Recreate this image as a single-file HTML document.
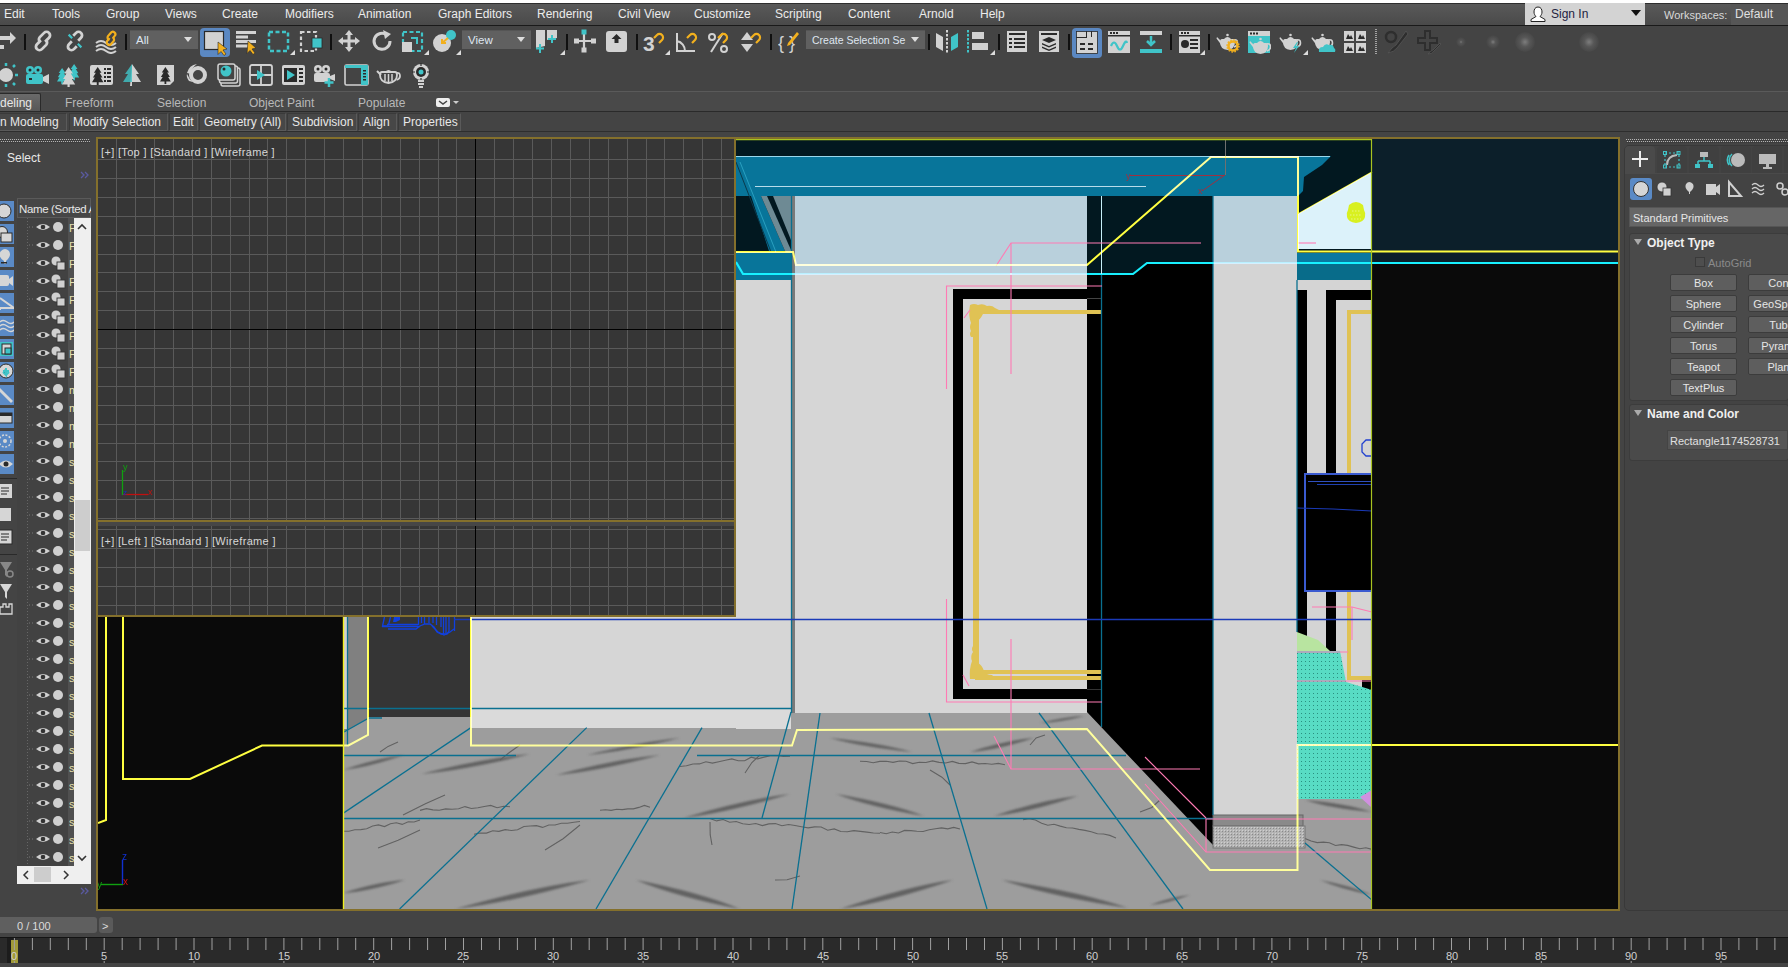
<!DOCTYPE html>
<html><head><meta charset="utf-8">
<style>
*{margin:0;padding:0;box-sizing:border-box}
html,body{width:1788px;height:967px;overflow:hidden;background:#444;font-family:"Liberation Sans",sans-serif;color:#ddd}
.a{position:absolute}
.t{position:absolute;white-space:nowrap;font-size:12px;line-height:14px}
svg text{font-family:"Liberation Sans",sans-serif}
</style></head><body>
<div class="a" style="left:0;top:0;width:1788px;height:3px;background:#fff"></div>
<div class="a" style="left:0;top:3px;width:1788px;height:22px;background:linear-gradient(#595959,#4a4a4a);border-top:1px solid #2e2e2e"></div>
<span class="t" style="left:4px;top:7px;font-size:12px;color:#ececec;">Edit</span>
<span class="t" style="left:52px;top:7px;font-size:12px;color:#ececec;">Tools</span>
<span class="t" style="left:106px;top:7px;font-size:12px;color:#ececec;">Group</span>
<span class="t" style="left:165px;top:7px;font-size:12px;color:#ececec;">Views</span>
<span class="t" style="left:222px;top:7px;font-size:12px;color:#ececec;">Create</span>
<span class="t" style="left:285px;top:7px;font-size:12px;color:#ececec;">Modifiers</span>
<span class="t" style="left:358px;top:7px;font-size:12px;color:#ececec;">Animation</span>
<span class="t" style="left:438px;top:7px;font-size:12px;color:#ececec;">Graph Editors</span>
<span class="t" style="left:537px;top:7px;font-size:12px;color:#ececec;">Rendering</span>
<span class="t" style="left:618px;top:7px;font-size:12px;color:#ececec;">Civil View</span>
<span class="t" style="left:694px;top:7px;font-size:12px;color:#ececec;">Customize</span>
<span class="t" style="left:775px;top:7px;font-size:12px;color:#ececec;">Scripting</span>
<span class="t" style="left:848px;top:7px;font-size:12px;color:#ececec;">Content</span>
<span class="t" style="left:919px;top:7px;font-size:12px;color:#ececec;">Arnold</span>
<span class="t" style="left:980px;top:7px;font-size:12px;color:#ececec;">Help</span>
<div class="a" style="left:0;top:25px;width:1788px;height:1px;background:#1a1a1a"></div>
<div class="a" style="left:1525px;top:3px;width:120px;height:22px;background:#d3d3d3"></div>
<span class="t" style="left:1551px;top:7px;font-size:12px;color:#1e1e40;">Sign In</span>
<svg class="a" style="left:1530px;top:5px" width="16" height="18"><path d="M8,2 c-3,0 -4,2.5 -4,5 c0,2 1,3.5 2,4.5 l-5,3 v2 h14 v-2 l-5,-3 c1,-1 2,-2.5 2,-4.5 c0,-2.5 -1,-5 -4,-5z" fill="#fff" stroke="#222" stroke-width="1"/></svg>
<svg class="a" style="left:1631px;top:10px" width="10" height="6"><path d="M0,0 h10 l-5,6z" fill="#111"/></svg>
<span class="t" style="left:1664px;top:8px;font-size:11px;color:#d8d8d8;">Workspaces:</span>
<div class="a" style="left:1731px;top:4px;width:57px;height:21px;background:#565656"></div>
<span class="t" style="left:1735px;top:7px;font-size:12px;color:#e0e0e0;">Default</span>
<div class="a" style="left:0;top:91px;width:1788px;height:1px;background:#5a5a5a"></div>
<div class="a" style="left:0;top:92px;width:1788px;height:20px;background:#494949"></div>
<div class="a" style="left:-5px;top:93px;width:46px;height:20px;background:linear-gradient(#6a6a6a,#555);border:1px solid #2a2a2a;border-bottom:none;border-radius:2px 2px 0 0"></div>
<div class="a" style="left:0;top:111px;width:1788px;height:1px;background:#2a2a2a"></div>
<span class="t" style="left:0px;top:96px;font-size:12px;color:#e8e8e8;">deling</span>
<span class="t" style="left:65px;top:96px;font-size:12px;color:#b8b8b8;">Freeform</span>
<span class="t" style="left:157px;top:96px;font-size:12px;color:#b8b8b8;">Selection</span>
<span class="t" style="left:249px;top:96px;font-size:12px;color:#b8b8b8;">Object Paint</span>
<span class="t" style="left:358px;top:96px;font-size:12px;color:#b8b8b8;">Populate</span>
<svg class="a" style="left:436px;top:97px" width="26" height="10"><rect x="0" y="1" width="14" height="9" rx="2" fill="#eee"/><path d="M3,4 l4,3 l4,-3" stroke="#444" stroke-width="1.5" fill="none"/><path d="M17,4 h6 l-3,3z" fill="#ccc"/></svg>
<div class="a" style="left:0;top:112px;width:1788px;height:20px;background:#444"></div>
<div class="a" style="left:-5px;top:113px;width:72px;height:18px;border:1px solid #5a5a5a;border-top-color:#3a3a3a;border-left-color:#3a3a3a;background:#474747"></div>
<div class="a" style="left:69px;top:113px;width:99px;height:18px;border:1px solid #5a5a5a;border-top-color:#3a3a3a;border-left-color:#3a3a3a;background:#474747"></div>
<div class="a" style="left:169px;top:113px;width:29px;height:18px;border:1px solid #5a5a5a;border-top-color:#3a3a3a;border-left-color:#3a3a3a;background:#474747"></div>
<div class="a" style="left:199px;top:113px;width:87px;height:18px;border:1px solid #5a5a5a;border-top-color:#3a3a3a;border-left-color:#3a3a3a;background:#474747"></div>
<div class="a" style="left:287px;top:113px;width:70px;height:18px;border:1px solid #5a5a5a;border-top-color:#3a3a3a;border-left-color:#3a3a3a;background:#474747"></div>
<div class="a" style="left:358px;top:113px;width:39px;height:18px;border:1px solid #5a5a5a;border-top-color:#3a3a3a;border-left-color:#3a3a3a;background:#474747"></div>
<div class="a" style="left:398px;top:113px;width:63px;height:18px;border:1px solid #5a5a5a;border-top-color:#3a3a3a;border-left-color:#3a3a3a;background:#474747"></div>
<span class="t" style="left:0px;top:115px;font-size:12px;color:#e8e8e8;">n Modeling</span>
<span class="t" style="left:73px;top:115px;font-size:12px;color:#e8e8e8;">Modify Selection</span>
<span class="t" style="left:173px;top:115px;font-size:12px;color:#e8e8e8;">Edit</span>
<span class="t" style="left:204px;top:115px;font-size:12px;color:#e8e8e8;">Geometry (All)</span>
<span class="t" style="left:292px;top:115px;font-size:12px;color:#e8e8e8;">Subdivision</span>
<span class="t" style="left:363px;top:115px;font-size:12px;color:#e8e8e8;">Align</span>
<span class="t" style="left:403px;top:115px;font-size:12px;color:#e8e8e8;">Properties</span>
<div class="a" style="left:0;top:131px;width:1788px;height:1px;background:#2e2e2e"></div>
<svg class="a" style="left:0;top:139px" width="90" height="4"><defs><pattern id="dp" width="2" height="4" patternUnits="userSpaceOnUse"><rect x="0" y="0" width="2" height="4" fill="#3c3c3c"/><rect x="0" y="0" width="1" height="1" fill="#b4b4b4"/><rect x="1" y="2" width="1" height="1" fill="#b4b4b4"/><rect x="1" y="0" width="1" height="1" fill="#4a4a4a"/><rect x="0" y="2" width="1" height="1" fill="#4a4a4a"/></pattern></defs><rect width="90" height="4" fill="url(#dp)"/></svg>
<svg class="a" style="left:1626px;top:139px" width="162" height="4"><rect width="162" height="4" fill="url(#dp)"/></svg>
<svg class="a" style="left:0px;top:30px" width="18" height="24" viewBox="0 0 18 24"><path d="M0,6 h10 v-4 l6,6 l-6,6 v-4 h-10z" fill="#d2d2d2"/><rect x="0" y="15" width="4" height="4" fill="#d2d2d2"/></svg>
<div class="a" style="left:24px;top:34px;width:1.5px;height:16px;background:#101010"></div>
<svg class="a" style="left:32px;top:30px" width="22" height="22" viewBox="0 0 22 22"><g stroke="#d2d2d2" stroke-width="2.8" fill="none" transform="rotate(-45 11 11)"><path d="M10,9 H4.5 A3.5,3.5 0 0 0 4.5,16 H10.5 A3.5,3.5 0 0 0 13.8,12"/><path d="M8.2,10 A3.5,3.5 0 0 1 11.5,6 H17.5 A3.5,3.5 0 0 1 17.5,13 H12"/></g></svg>
<svg class="a" style="left:64px;top:30px" width="22" height="22" viewBox="0 0 22 22"><g transform="rotate(-45 11 11)"><g stroke="#d2d2d2" stroke-width="2.8" fill="none"><path d="M8.5,9 H4.5 A3.5,3.5 0 0 0 4.5,16 H8.5"/><path d="M13.5,13 H17.5 A3.5,3.5 0 0 0 17.5,6 H13.5"/></g><path d="M11,2 v5 M11,15 v5" stroke="#40c4c8" stroke-width="2.2"/></g></svg>
<svg class="a" style="left:95px;top:30px" width="24" height="24" viewBox="0 0 24 24"><g stroke="#d2d2d2" stroke-width="2" fill="none"><path d="M1,13 q5,-4 10,0 t10,0"/><path d="M1,17 q5,-4 10,0 t10,0"/><path d="M1,21 q5,-4 10,0 t10,0"/></g><g stroke="#f2b01e" stroke-width="2.2" fill="none" transform="rotate(-50 16 8)"><path d="M15,7 H11.5 A2.5,2.5 0 0 0 11.5,12 H15.5 A2.5,2.5 0 0 0 17.5,9"/><path d="M13.5,8 A2.5,2.5 0 0 1 15.5,4.5 H20 A2.5,2.5 0 0 1 20,9.5 H17"/></g></svg>
<div class="a" style="left:125px;top:34px;width:1.5px;height:16px;background:#101010"></div>
<div class="a" style="left:130px;top:30px;width:68px;height:19px;background:#606060;border-top:1px solid #555"></div><span class="t" style="left:136px;top:33px;font-size:11.5px;color:#dfe6f0">All</span><svg class="a" style="left:184px;top:37px" width="8" height="5"><path d="M0,0 h8 l-4,5z" fill="#ddd"/></svg>
<div class="a" style="left:200px;top:28px;width:30px;height:29px;background:#5b88c2;border-radius:4px"></div>
<svg class="a" style="left:203px;top:30px" width="26" height="26" viewBox="0 0 26 26"><rect x="1.5" y="1.5" width="19" height="18" fill="#d2d2d2" stroke="#2a2a2a" stroke-width="1.2"/><path d="M15,12 l9,7 l-4,1 l3,4 l-2,1.5 l-3,-4 l-3,3z" fill="#f2b01e" stroke="#2a2a2a" stroke-width="0.6"/></svg>
<svg class="a" style="left:235px;top:30px" width="24" height="26" viewBox="0 0 24 26"><g fill="#d2d2d2"><rect x="1" y="1" width="20" height="3"/><rect x="1" y="5.5" width="12" height="3"/><rect x="1" y="10" width="20" height="3"/><rect x="1" y="14.5" width="12" height="3"/></g><path d="M13,11 l8,7 l-4,1 l3,4 l-2,1.5 l-3,-4 l-3,3z" fill="#f2b01e" stroke="#2a2a2a" stroke-width="0.6"/></svg>
<svg class="a" style="left:267px;top:30px" width="26" height="26" viewBox="0 0 26 26"><rect x="2" y="2" width="19" height="19" fill="none" stroke="#40c4c8" stroke-width="2.5" stroke-dasharray="4,2.5"/></svg>
<svg class="a" style="left:290px;top:50px" width="5" height="5"><path d="M5,0 v5 h-5z" fill="#ddd"/></svg>
<svg class="a" style="left:299px;top:30px" width="26" height="26" viewBox="0 0 26 26"><rect x="2" y="2" width="15" height="19" fill="none" stroke="#d2d2d2" stroke-width="2.2" stroke-dasharray="3.5,2.5"/><rect x="13" y="8" width="10" height="10" fill="#40c4c8" stroke="#2a2a2a" stroke-width="0.8"/></svg>
<div class="a" style="left:330px;top:34px;width:1.5px;height:16px;background:#101010"></div>
<svg class="a" style="left:337px;top:29px" width="24" height="24" viewBox="0 0 24 24"><path d="M12,1 l4,5 h-2.5 v4.5 h4.5 v-2.5 l5,4 l-5,4 v-2.5 h-4.5 v4.5 h2.5 l-4,5 l-4,-5 h2.5 v-4.5 h-4.5 v2.5 l-5,-4 l5,-4 v2.5 h4.5 v-4.5 h-2.5z" fill="#d2d2d2"/></svg>
<svg class="a" style="left:370px;top:29px" width="24" height="24" viewBox="0 0 24 24"><path d="M17,6 a8,8 0 1 0 3,6" fill="none" stroke="#d2d2d2" stroke-width="3"/><path d="M13,1 l8,4 l-6,5z" fill="#d2d2d2"/></svg>
<svg class="a" style="left:401px;top:30px" width="26" height="26" viewBox="0 0 26 26"><rect x="2" y="2" width="19" height="19" fill="none" stroke="#40c4c8" stroke-width="2.2" stroke-dasharray="4,2.5"/><rect x="1" y="12" width="10" height="10" fill="#d2d2d2"/><path d="M10,8 h6 v6" stroke="#40c4c8" stroke-width="2" fill="none"/></svg>
<svg class="a" style="left:424px;top:50px" width="5" height="5"><path d="M5,0 v5 h-5z" fill="#ddd"/></svg>
<svg class="a" style="left:433px;top:29px" width="24" height="26" viewBox="0 0 24 26"><circle cx="9" cy="14" r="9" fill="#d2d2d2"/><circle cx="18" cy="6" r="5" fill="#40c4c8"/><path d="M15,9 l-6,5 M9,10 v4 h4" stroke="#f2b01e" stroke-width="2" fill="none"/></svg>
<svg class="a" style="left:456px;top:50px" width="5" height="5"><path d="M5,0 v5 h-5z" fill="#ddd"/></svg>
<div class="a" style="left:462px;top:30px;width:69px;height:19px;background:#606060;border-top:1px solid #555"></div><span class="t" style="left:468px;top:33px;font-size:11.5px;color:#dfe6f0">View</span><svg class="a" style="left:517px;top:37px" width="8" height="5"><path d="M0,0 h8 l-4,5z" fill="#ddd"/></svg>
<svg class="a" style="left:535px;top:29px" width="26" height="26" viewBox="0 0 26 26"><path d="M1,1 h9 v16 l-9,2z" fill="#d2d2d2"/><path d="M12,1 h10 v8 l-10,2z" fill="#d2d2d2"/><path d="M5,15 v9 M1,19.5 h8 M17,6 v8 M13,10 h8" stroke="#40c4c8" stroke-width="2"/></svg>
<svg class="a" style="left:560px;top:50px" width="5" height="5"><path d="M5,0 v5 h-5z" fill="#ddd"/></svg>
<div class="a" style="left:566px;top:34px;width:1.5px;height:16px;background:#101010"></div>
<svg class="a" style="left:573px;top:28px" width="24" height="26" viewBox="0 0 24 26"><path d="M11,4 v18 M2,13 h20" stroke="#d2d2d2" stroke-width="2.2"/><rect x="8.5" y="1.5" width="5" height="5" fill="#40c4c8"/><rect x="1" y="10.5" width="5" height="5" fill="#d2d2d2"/><rect x="18" y="10.5" width="5" height="5" fill="#d2d2d2"/><rect x="8.5" y="19.5" width="5" height="5" fill="#d2d2d2"/></svg>
<svg class="a" style="left:605px;top:30px" width="23" height="23" viewBox="0 0 23 23"><rect x="1" y="1" width="21" height="21" rx="3" fill="#d2d2d2"/><path d="M11.5,4 l5,5 h-3 v4 h-4 v-4 h-3z" fill="#2a2a2a"/></svg>
<div class="a" style="left:636px;top:34px;width:1.5px;height:16px;background:#101010"></div>
<svg class="a" style="left:643px;top:29px" width="24" height="26" viewBox="0 0 24 26"><text x="0" y="22" font-size="21" font-weight="bold" fill="#d2d2d2" font-family="Liberation Sans">3</text><path d="M11,9 l3,-3 a3.5,3.5 0 0 1 5,5 l-3,3" stroke="#f2b01e" stroke-width="2.2" fill="none"/></svg>
<svg class="a" style="left:665px;top:50px" width="5" height="5"><path d="M5,0 v5 h-5z" fill="#ddd"/></svg>
<svg class="a" style="left:675px;top:29px" width="24" height="26" viewBox="0 0 24 26"><path d="M2,4 v18 h18 M2,12 a10,10 0 0 1 8,10" stroke="#d2d2d2" stroke-width="2" fill="none"/><path d="M12,9 l3,-3 a3.5,3.5 0 0 1 5,5 l-3,3" stroke="#f2b01e" stroke-width="2.2" fill="none"/></svg>
<svg class="a" style="left:707px;top:29px" width="24" height="26" viewBox="0 0 24 26"><circle cx="5" cy="8" r="3" fill="none" stroke="#d2d2d2" stroke-width="2"/><circle cx="17" cy="20" r="3" fill="none" stroke="#d2d2d2" stroke-width="2"/><path d="M4,23 l12,-19" stroke="#d2d2d2" stroke-width="2"/><path d="M11,9 l3,-3 a3.5,3.5 0 0 1 5,5 l-3,3" stroke="#f2b01e" stroke-width="2.2" fill="none"/></svg>
<svg class="a" style="left:740px;top:29px" width="24" height="26" viewBox="0 0 24 26"><path d="M1,11 l6,-8 l6,8z M1,15 h12 l-6,8z" fill="#d2d2d2"/><path d="M11,9 l3,-3 a3.5,3.5 0 0 1 5,5 l-3,3" stroke="#f2b01e" stroke-width="2.2" fill="none"/></svg>
<div class="a" style="left:770px;top:34px;width:1.5px;height:16px;background:#101010"></div>
<svg class="a" style="left:778px;top:29px" width="24" height="26" viewBox="0 0 24 26"><text x="0" y="20" font-size="18" fill="#d2d2d2" font-family="Liberation Sans">{ }</text><path d="M10,14 l9,-11 l2,2 l-9,11 l-3,1z" fill="#f2b01e"/></svg>
<div class="a" style="left:806px;top:30px;width:119px;height:19px;background:#606060;border-top:1px solid #555"></div><span class="t" style="left:812px;top:33px;font-size:10.5px;color:#dfe6f0">Create Selection Se</span><svg class="a" style="left:911px;top:37px" width="8" height="5"><path d="M0,0 h8 l-4,5z" fill="#ddd"/></svg>
<div class="a" style="left:928px;top:34px;width:1.5px;height:16px;background:#101010"></div>
<svg class="a" style="left:934px;top:29px" width="26" height="26" viewBox="0 0 26 26"><path d="M2,4 l7,4 v14 l-7,-4z" fill="#d2d2d2"/><path d="M24,4 l-7,4 v14 l7,-4z" fill="#40c4c8"/><path d="M13,1 v24" stroke="#d2d2d2" stroke-width="2" stroke-dasharray="2.5,1.5"/></svg>
<svg class="a" style="left:966px;top:29px" width="26" height="26" viewBox="0 0 26 26"><path d="M2,1 v24" stroke="#40c4c8" stroke-width="2" stroke-dasharray="2.5,1.5"/><rect x="6" y="3" width="12" height="7" fill="#d2d2d2"/><rect x="6" y="14" width="16" height="7" fill="#d2d2d2"/></svg>
<svg class="a" style="left:990px;top:50px" width="5" height="5"><path d="M5,0 v5 h-5z" fill="#ddd"/></svg>
<div class="a" style="left:998px;top:34px;width:1.5px;height:16px;background:#101010"></div>
<svg class="a" style="left:1006px;top:30px" width="22" height="24" viewBox="0 0 22 24"><rect x="1" y="1" width="20" height="21" fill="#d2d2d2"/><g fill="#2a2a2a"><rect x="3" y="3" width="16" height="2"/><rect x="3" y="8" width="3" height="2"/><rect x="8" y="8" width="11" height="2"/><rect x="3" y="12" width="3" height="2"/><rect x="8" y="12" width="11" height="2"/><rect x="3" y="16" width="3" height="2"/><rect x="8" y="16" width="11" height="2"/></g></svg>
<svg class="a" style="left:1038px;top:30px" width="22" height="24" viewBox="0 0 22 24"><rect x="1" y="1" width="20" height="21" fill="#d2d2d2"/><g fill="#2a2a2a"><rect x="3" y="3" width="16" height="2"/><path d="M11,7 l7,3 l-7,3 l-7,-3z M4,13 l7,3 l7,-3 v1.5 l-7,3 l-7,-3z M4,16.5 l7,3 l7,-3 v1.5 l-7,3 l-7,-3z"/></g></svg>
<div class="a" style="left:1068px;top:34px;width:1.5px;height:16px;background:#101010"></div>
<div class="a" style="left:1072px;top:28px;width:30px;height:30px;background:#5b88c2;border-radius:4px"></div>
<svg class="a" style="left:1076px;top:31px" width="22" height="24" viewBox="0 0 22 24"><rect x="0.5" y="0.5" width="21" height="22" fill="#d2d2d2" stroke="#2a2a2a" stroke-width="0.8"/><g fill="#2a2a2a"><rect x="4" y="12" width="5" height="2"/><rect x="12" y="12" width="5" height="2"/><rect x="4" y="17" width="5" height="2"/><rect x="12" y="17" width="5" height="2"/><path d="M0,6 h10 v-6 h1 v7 h-11z"/><rect x="15" y="0" width="1" height="6"/></g></svg>
<svg class="a" style="left:1107px;top:30px" width="24" height="24" viewBox="0 0 24 24"><rect x="1" y="1" width="22" height="22" fill="#d2d2d2"/><g fill="#2a2a2a"><rect x="1" y="5" width="22" height="1.5"/><rect x="3" y="2" width="2" height="2"/><rect x="6" y="2" width="2" height="2"/><rect x="9" y="2" width="2" height="2"/></g><path d="M4,16 q3,-7 6,0 t6,0 t4,-3" stroke="#40c4c8" stroke-width="2.2" fill="none"/></svg>
<svg class="a" style="left:1139px;top:30px" width="24" height="24" viewBox="0 0 24 24"><rect x="1" y="1" width="22" height="4" fill="#d2d2d2"/><rect x="1" y="19" width="22" height="4" fill="#40c4c8"/><path d="M12,6 v8 M8,11 l4,4 l4,-4" stroke="#40c4c8" stroke-width="2.5" fill="none"/></svg>
<div class="a" style="left:1170px;top:34px;width:1.5px;height:16px;background:#101010"></div>
<svg class="a" style="left:1178px;top:30px" width="22" height="24" viewBox="0 0 22 24"><rect x="1" y="1" width="21" height="22" fill="#d2d2d2"/><g fill="#2a2a2a"><rect x="1" y="5" width="21" height="1.5"/><rect x="3" y="2" width="2" height="2"/><rect x="6" y="2" width="2" height="2"/><rect x="9" y="2" width="2" height="2"/><rect x="12" y="9" width="8" height="2"/><rect x="12" y="13" width="8" height="2"/><rect x="12" y="17" width="8" height="2"/><circle cx="7" cy="14" r="4"/></g></svg>
<svg class="a" style="left:1200px;top:50px" width="5" height="5"><path d="M5,0 v5 h-5z" fill="#ddd"/></svg>
<div class="a" style="left:1208px;top:34px;width:1.5px;height:16px;background:#101010"></div>
<svg class="a" style="left:1216px;top:30px" width="24" height="24" viewBox="0 0 24 24"><path d="M6,9 h11 q2,0 2,3 q0,7 -7.5,8 q-7.5,-1 -7.5,-8 q0,-3 2,-3z" fill="#d2d2d2"/><path d="M6,12 l-5,-5 l-0.5,1.5 l4.5,6z" fill="#d2d2d2"/><path d="M17.5,10 q4,-1 4,3 q0,3 -3.5,4" fill="none" stroke="#d2d2d2" stroke-width="1.6"/><path d="M8,9 q3.5,-4 7,0z" fill="#d2d2d2"/><circle cx="11.5" cy="5" r="1.3" fill="#d2d2d2"/><circle cx="17" cy="16" r="4.5" fill="none" stroke="#f2b01e" stroke-width="2.5"/><circle cx="17" cy="16" r="6" fill="none" stroke="#f2b01e" stroke-width="1.5" stroke-dasharray="1.5,1.6"/></svg>
<svg class="a" style="left:1247px;top:30px" width="24" height="24" viewBox="0 0 24 24"><rect x="1" y="1" width="22" height="22" fill="#40c4c8"/><rect x="1" y="1" width="22" height="5" fill="#d2d2d2"/><g fill="#2a2a2a"><rect x="3" y="2.5" width="2" height="2"/><rect x="6" y="2.5" width="2" height="2"/><rect x="9" y="2.5" width="2" height="2"/></g><g transform="translate(2,4)"><path d="M6,9 h11 q2,0 2,3 q0,7 -7.5,8 q-7.5,-1 -7.5,-8 q0,-3 2,-3z" fill="#d2d2d2"/><path d="M6,12 l-5,-5 l-0.5,1.5 l4.5,6z" fill="#d2d2d2"/><path d="M17.5,10 q4,-1 4,3 q0,3 -3.5,4" fill="none" stroke="#d2d2d2" stroke-width="1.6"/><path d="M8,9 q3.5,-4 7,0z" fill="#d2d2d2"/><circle cx="11.5" cy="5" r="1.3" fill="#d2d2d2"/></g></svg>
<svg class="a" style="left:1279px;top:30px" width="26" height="24" viewBox="0 0 26 24"><path d="M6,9 h11 q2,0 2,3 q0,7 -7.5,8 q-7.5,-1 -7.5,-8 q0,-3 2,-3z" fill="#d2d2d2"/><path d="M6,12 l-5,-5 l-0.5,1.5 l4.5,6z" fill="#d2d2d2"/><path d="M17.5,10 q4,-1 4,3 q0,3 -3.5,4" fill="none" stroke="#d2d2d2" stroke-width="1.6"/><path d="M8,9 q3.5,-4 7,0z" fill="#d2d2d2"/><circle cx="11.5" cy="5" r="1.3" fill="#d2d2d2"/><path d="M18,12 l-4,6 h3 l-2,5 l5,-7 h-3 l2,-4z" fill="#40c4c8"/></svg>
<svg class="a" style="left:1303px;top:50px" width="5" height="5"><path d="M5,0 v5 h-5z" fill="#ddd"/></svg>
<svg class="a" style="left:1311px;top:30px" width="26" height="24" viewBox="0 0 26 24"><path d="M6,9 h11 q2,0 2,3 q0,7 -7.5,8 q-7.5,-1 -7.5,-8 q0,-3 2,-3z" fill="#d2d2d2"/><path d="M6,12 l-5,-5 l-0.5,1.5 l4.5,6z" fill="#d2d2d2"/><path d="M17.5,10 q4,-1 4,3 q0,3 -3.5,4" fill="none" stroke="#d2d2d2" stroke-width="1.6"/><path d="M8,9 q3.5,-4 7,0z" fill="#d2d2d2"/><circle cx="11.5" cy="5" r="1.3" fill="#d2d2d2"/><path d="M8,22 q-1,-5 4,-5 q2,-4 6,-2 q4,-1 5,3 q2,1 1,4z" fill="#40c4c8"/></svg>
<svg class="a" style="left:1343px;top:30px" width="24" height="24" viewBox="0 0 24 24"><g fill="#d2d2d2"><rect x="1" y="1" width="10" height="10"/><rect x="13" y="1" width="10" height="10"/><rect x="1" y="13" width="10" height="10"/><rect x="13" y="13" width="10" height="10"/></g><g fill="#2a2a2a"><path d="M3,9 l2,-5 l2,3 l1,-2 l2,4z M15,9 l2,-5 l2,3 l1,-2 l2,4z M3,21 l2,-5 l2,3 l1,-2 l2,4z M15,21 l2,-5 l2,3 l1,-2 l2,4z"/></g></svg>
<div class="a" style="left:1375px;top:29px;width:2px;height:26px;background-image:linear-gradient(#bbb 50%,transparent 50%);background-size:2px 2px;opacity:.8"></div>
<svg class="a" style="left:1384px;top:29px" width="26" height="26" viewBox="0 0 26 26"><circle cx="7" cy="8" r="5" fill="none" stroke="#2e2e2e" stroke-width="2.5"/><path d="M22,2 l-10,14 q-4,2 -8,8 q6,-1 9,-5 l11,-14z" fill="#2e2e2e" stroke="#555" stroke-width="0.8"/></svg>
<svg class="a" style="left:1416px;top:29px" width="26" height="26" viewBox="0 0 26 26"><path d="M9,2 h5 v7 h7 v5 h-7 v7 h-5 v-7 h-7 v-5 h7z" fill="none" stroke="#2e2e2e" stroke-width="2"/><path d="M24,14 l-7,7 q-3,1 -5,4 q4,0 6,-3 l7,-7z" fill="#2e2e2e" stroke="#555" stroke-width="0.8"/></svg>
<div class="a" style="left:1451px;top:32px;width:20px;height:20px;border-radius:50%;background:radial-gradient(circle,rgba(125,125,125,1) 0,rgba(95,95,95,.7) 1.2px,rgba(68,68,68,0) 5px)"></div>
<div class="a" style="left:1483px;top:32px;width:20px;height:20px;border-radius:50%;background:radial-gradient(circle,rgba(125,125,125,1) 0,rgba(95,95,95,.7) 2.4px,rgba(68,68,68,0) 7px)"></div>
<div class="a" style="left:1515px;top:32px;width:20px;height:20px;border-radius:50%;background:radial-gradient(circle,rgba(125,125,125,1) 0,rgba(95,95,95,.7) 4.8px,rgba(68,68,68,0) 11px)"></div>
<div class="a" style="left:1579px;top:32px;width:20px;height:20px;border-radius:50%;background:radial-gradient(circle,rgba(125,125,125,1) 0,rgba(95,95,95,.7) 4.8px,rgba(68,68,68,0) 11px)"></div>
<svg class="a" style="left:0px;top:63px" width="18" height="24" viewBox="0 0 18 24"><circle cx="6" cy="12" r="7" fill="#d2d2d2"/><g stroke="#40c4c8" stroke-width="2.5"><path d="M6,0 v3 M6,21 v3 M15,12 h3 M13,4 l2,-2 M13,20 l2,2"/></g></svg>
<svg class="a" style="left:24px;top:63px" width="26" height="24" viewBox="0 0 26 24"><circle cx="6" cy="7" r="4" fill="#40c4c8"/><circle cx="14" cy="7" r="4" fill="#40c4c8"/><circle cx="6" cy="7" r="1.5" fill="#2a2a2a"/><circle cx="14" cy="7" r="1.5" fill="#2a2a2a"/><rect x="2" y="11" width="17" height="10" rx="2" fill="#40c4c8"/><path d="M19,14 l6,-3 v10 l-6,-3z" fill="#d2d2d2"/><rect x="5" y="15" width="3" height="2" fill="#2a2a2a"/></svg>
<svg class="a" style="left:57px;top:63px" width="26" height="24" viewBox="0 0 26 24"><path transform="translate(0,5) scale(0.85)" d="M6,0 l4,6 h-2 l3,5 h-2 l3,5 h-5 v3 h-2 v-3 h-5 l3,-5 h-2 l3,-5 h-2z" fill="#40c4c8"/><path transform="translate(12,1) scale(0.85)" d="M6,0 l4,6 h-2 l3,5 h-2 l3,5 h-5 v3 h-2 v-3 h-5 l3,-5 h-2 l3,-5 h-2z" fill="#40c4c8"/><path transform="translate(5,4) scale(1.1)" d="M6,0 l4,6 h-2 l3,5 h-2 l3,5 h-5 v3 h-2 v-3 h-5 l3,-5 h-2 l3,-5 h-2z" fill="#d2d2d2"/></svg>
<svg class="a" style="left:89px;top:63px" width="25" height="24" viewBox="0 0 25 24"><rect x="1" y="2" width="23" height="20" rx="2" fill="#d2d2d2"/><path transform="translate(3,4) scale(0.95)" d="M6,0 l4,6 h-2 l3,5 h-2 l3,5 h-5 v3 h-2 v-3 h-5 l3,-5 h-2 l3,-5 h-2z" fill="#2a2a2a"/><g fill="#2a2a2a"><rect x="15" y="5" width="2" height="2"/><rect x="18" y="5" width="4" height="2"/><rect x="15" y="9" width="2" height="2"/><rect x="18" y="9" width="4" height="2"/><rect x="15" y="13" width="2" height="2"/><rect x="18" y="13" width="4" height="2"/><rect x="15" y="17" width="2" height="2"/><rect x="18" y="17" width="4" height="2"/></g></svg>
<svg class="a" style="left:122px;top:63px" width="22" height="24" viewBox="0 0 22 24"><path d="M10,1 l7,10 h-3 l5,8 h-9 v4 h-2z" fill="#d2d2d2"/><path d="M10,1 l-7,10 h3 l-5,8 h9 v4z" fill="#40c4c8" opacity="0.8"/></svg>
<svg class="a" style="left:156px;top:63px" width="20" height="24" viewBox="0 0 20 24"><path d="M1,2 h17 v16 l-4,4 h-13z" fill="#d2d2d2"/><path transform="translate(4,4) scale(0.9)" d="M6,0 l4,6 h-2 l3,5 h-2 l3,5 h-5 v3 h-2 v-3 h-5 l3,-5 h-2 l3,-5 h-2z" fill="#2a2a2a"/></svg>
<svg class="a" style="left:185px;top:63px" width="24" height="24" viewBox="0 0 24 24"><circle cx="13" cy="12" r="7" fill="none" stroke="#d2d2d2" stroke-width="4"/><path d="M2,10 q2,-8 10,-9 q-6,4 -6,10z M4,18 q-3,-4 -2,-7 q2,5 6,8z" fill="#d2d2d2"/></svg>
<svg class="a" style="left:217px;top:63px" width="24" height="24" viewBox="0 0 24 24"><rect x="4" y="5" width="19" height="18" rx="2" fill="none" stroke="#d2d2d2" stroke-width="1.5"/><rect x="2.5" y="3" width="18" height="17" rx="2" fill="#444" stroke="#d2d2d2" stroke-width="1.5"/><rect x="1" y="1" width="17" height="16" rx="2" fill="#444" stroke="#d2d2d2" stroke-width="1.5"/><circle cx="9" cy="8" r="5.5" fill="#40c4c8"/><circle cx="7" cy="6" r="1.5" fill="#2a2a2a"/></svg>
<svg class="a" style="left:249px;top:63px" width="24" height="24" viewBox="0 0 24 24"><rect x="1" y="2" width="22" height="20" rx="2" fill="none" stroke="#d2d2d2" stroke-width="1.8"/><path d="M12,2 v20 M1,12 h22" stroke="#d2d2d2" stroke-width="1.8"/><path d="M8,7 l8,5 l-8,5z" fill="#40c4c8"/></svg>
<svg class="a" style="left:281px;top:63px" width="25" height="24" viewBox="0 0 25 24"><rect x="1" y="2" width="23" height="20" rx="2" fill="#d2d2d2"/><rect x="3" y="5" width="13" height="14" fill="#2a2a2a"/><path d="M6,7 l8,5 l-8,5z" fill="#40c4c8"/><g fill="#2a2a2a"><rect x="18" y="5" width="4" height="2"/><rect x="18" y="9" width="4" height="2"/><rect x="18" y="13" width="4" height="2"/><rect x="18" y="17" width="4" height="2"/></g></svg>
<svg class="a" style="left:312px;top:63px" width="26" height="24" viewBox="0 0 26 24"><circle cx="6" cy="6" r="4" fill="#d2d2d2"/><circle cx="14" cy="6" r="4" fill="#d2d2d2"/><circle cx="6" cy="6" r="1.5" fill="#2a2a2a"/><circle cx="14" cy="6" r="1.5" fill="#2a2a2a"/><rect x="2" y="10" width="16" height="9" rx="2" fill="#d2d2d2"/><path d="M18,13 l5,-2 v7 l-5,-2z" fill="#d2d2d2"/><path d="M17,15 v9 M12.5,19.5 h9" stroke="#40c4c8" stroke-width="2.5"/></svg>
<svg class="a" style="left:344px;top:63px" width="25" height="24" viewBox="0 0 25 24"><rect x="1" y="2" width="23" height="20" rx="1.5" fill="none" stroke="#d2d2d2" stroke-width="1.6"/><rect x="1" y="2" width="23" height="3" fill="#40c4c8"/><rect x="17" y="2" width="7" height="20" fill="#40c4c8"/><g fill="#2a2a2a"><rect x="19" y="7" width="3" height="1.5"/><rect x="19" y="10" width="3" height="1.5"/><rect x="19" y="13" width="3" height="1.5"/><rect x="19" y="16" width="3" height="1.5"/></g></svg>
<svg class="a" style="left:376px;top:63px" width="26" height="24" viewBox="0 0 26 24"><path d="M6,9 h13 q2,0 2,3 q0,7 -8.5,8 q-8.5,-1 -8.5,-8 q0,-3 2,-3z" fill="none" stroke="#d2d2d2" stroke-width="1.8"/><path d="M5,12 l-4,-4" stroke="#d2d2d2" stroke-width="2"/><path d="M20,10 q4,-1 4,3 q0,3 -3.5,4" fill="none" stroke="#d2d2d2" stroke-width="1.8"/><path d="M9,9 q3.5,-4 7,0z" fill="#d2d2d2"/><path d="M9,11 v7 M12.5,11 v8 M16,11 v7" stroke="#d2d2d2" stroke-width="1.5"/></svg>
<svg class="a" style="left:412px;top:63px" width="18" height="26" viewBox="0 0 18 26"><circle cx="9" cy="9" r="8" fill="#d2d2d2"/><circle cx="9" cy="9" r="5" fill="#2a2a2a"/><circle cx="9" cy="9" r="2.5" fill="#40c4c8"/><g stroke="#2a2a2a" stroke-width="1.2"><path d="M9,0 v3 M9,15 v3 M0,9 h3 M15,9 h3"/></g><rect x="6" y="17" width="6" height="2" fill="#d2d2d2"/><rect x="6" y="20" width="6" height="2" fill="#d2d2d2"/><rect x="7" y="23" width="4" height="2" fill="#d2d2d2"/></svg>
<div class="a" style="left:96px;top:137px;width:1524px;height:774px;background:#84702c"></div>
<svg class="a" style="left:0;top:0" width="1788" height="967" viewBox="0 0 1788 967">
<defs><clipPath id="vpc"><rect x="98" y="139" width="1520" height="770"/></clipPath><clipPath id="scc"><rect x="343" y="139" width="1029" height="770"/></clipPath><filter id="bl" x="-20%" y="-50%" width="140%" height="200%"><feGaussianBlur stdDeviation="1.2"/></filter><filter id="bl2"><feGaussianBlur stdDeviation="0.4"/></filter><pattern id="dots" width="4" height="4" patternUnits="userSpaceOnUse"><rect width="4" height="4" fill="#58dcc4"/><rect x="1" y="1" width="1" height="1" fill="#2a9080"/></pattern><pattern id="noise" width="3" height="3" patternUnits="userSpaceOnUse"><rect width="3" height="3" fill="#b4b4b4"/><rect x="1" y="0" width="1" height="1" fill="#8a8a8a"/><rect x="0" y="2" width="1" height="1" fill="#cfcfcf"/></pattern></defs>
<g clip-path="url(#vpc)">
<rect x="98" y="139" width="1520" height="770" fill="#0a0a0a"/>
<rect x="1372" y="139" width="246" height="124" fill="#0c1f2a"/>
<g clip-path="url(#scc)">
<rect x="343" y="139" width="1029" height="160" fill="#021820"/>
<rect x="343" y="710" width="1029" height="199" fill="#9d9d9d"/>
<g fill="#626262" filter="url(#bl)">
<path d="M343,770 Q368.2,767.4 404,755 Q378.8,757.6 343,770z"/>
<path d="M421,774 Q465.4,770.2 530,754 Q485.6,757.8 421,774z"/>
<path d="M556,775 Q598.4,771.2 660,755 Q617.6,758.8 556,775z"/>
<path d="M587,755 Q624.8,751.4 680,738 Q642.2,741.6 587,755z"/>
<path d="M830,738 Q862.2,747.1 912,752 Q879.8,742.9 830,738z"/>
<path d="M683,818 Q726.8,812.9 790,794 Q746.2,799.1 683,818z"/>
<path d="M836,794 Q870.2,807.0 924,816 Q889.8,803.0 836,794z"/>
<path d="M343,893 Q368.6,891.5 405,880 Q379.4,881.5 343,893z"/>
<path d="M455,909 Q510.1,902.7 590,880 Q534.9,886.3 455,909z"/>
<path d="M636,880 Q676.1,896.8 740,909 Q699.9,892.2 636,880z"/>
<path d="M840,909 Q886.5,902.6 953,880 Q906.5,886.4 840,909z"/>
<path d="M970,752 Q996.4,750.1 1034,738 Q1007.6,739.9 970,752z"/>
<path d="M994,816 Q1028.7,812.5 1078,796 Q1043.3,799.5 994,816z"/>
<path d="M1002,880 Q1051.2,896.5 1128,908 Q1078.8,891.5 1002,880z"/>
<path d="M1305,800 Q1331.1,808.5 1372,812 Q1345.9,803.5 1305,800z"/>
<path d="M1040,723 Q1058.4,722.6 1085,716 Q1066.6,716.4 1040,723z"/>
<path d="M1150,905 Q1166.7,903.6 1190,895 Q1173.3,896.4 1150,905z"/>
<path d="M1320,880 Q1340.0,888.9 1372,895 Q1352.0,886.1 1320,880z"/>
</g>
<g stroke="#626262" stroke-width="1.1" fill="none" filter="url(#bl2)">
<polyline points="343.0,831.2 348.9,831.2 354.8,829.7 360.8,829.6 366.7,828.7 372.6,826.0 378.5,824.9 384.5,826.6 390.4,823.8 396.3,822.8 402.2,824.4 408.2,821.8 414.1,822.0 420.0,819.9"/>
<polyline points="420.0,810.4 426.4,808.6 432.9,809.9 439.3,810.3 445.7,808.9 452.1,809.3 458.6,808.8 465.0,806.6 471.4,808.5 477.9,807.7 484.3,806.5 490.7,805.4 497.1,807.7 503.6,806.2 510.0,806.7"/>
<polyline points="474.0,834.2 480.2,833.0 486.5,833.1 492.7,830.7 498.9,831.4 505.2,829.6 511.4,830.5 517.6,829.7 523.9,826.5 530.1,826.0 536.4,825.6 542.6,827.4 548.8,825.0 555.1,825.0 561.3,823.3 567.5,823.3 573.8,822.3 580.0,821.5"/>
<polyline points="600.0,810.3 605.6,809.8 611.1,810.4 616.7,809.2 622.2,809.6 627.8,808.9 633.3,808.9 638.9,807.4 644.4,805.4 650.0,807.2"/>
<polyline points="680.0,766.5 686.5,765.7 692.9,764.0 699.4,763.9 705.9,761.7 712.4,763.1 718.8,761.7 725.3,760.2 731.8,758.9 738.2,760.8 744.7,760.7 751.2,757.2 757.6,758.9 764.1,757.1 770.6,755.6 777.1,755.5 783.5,756.4 790.0,756.2"/>
<polyline points="710.0,818.5 716.5,820.9 723.1,819.5 729.6,822.2 736.2,821.5 742.7,823.7 749.2,824.5 755.8,823.5 762.3,825.6 768.8,823.9 775.4,823.6 781.9,825.8 788.5,824.5 795.0,825.5 801.5,826.7 808.1,827.9 814.6,826.9 821.2,827.0 827.7,830.2 834.2,828.9 840.8,831.5 847.3,831.8 853.8,830.6 860.4,831.4 866.9,832.1 873.5,833.0 880.0,833.3"/>
<polyline points="860.0,761.2 866.6,761.5 873.2,762.7 879.8,761.4 886.4,761.3 893.0,762.4 899.5,761.0 906.1,761.3 912.7,763.6 919.3,762.3 925.9,762.5 932.5,760.9 939.1,762.4 945.7,763.0 952.3,761.4 958.9,763.4 965.5,763.6 972.0,761.9 978.6,763.9 985.2,763.5 991.8,764.3 998.4,763.4 1005.0,764.7"/>
<polyline points="1023.0,819.8 1029.2,818.7 1035.4,820.0 1041.6,823.2 1047.8,825.3 1054.0,824.2 1060.2,826.1 1066.4,827.7 1072.6,828.0 1078.8,829.4 1085.0,830.4 1091.2,831.8 1097.4,833.7 1103.6,834.0 1109.8,835.4 1116.0,837.9"/>
<polyline points="1305.0,838.5 1311.1,841.1 1317.2,842.6 1323.3,842.1 1329.4,842.7 1335.5,845.5 1341.5,844.6 1347.6,845.4 1353.7,847.1 1359.8,848.8 1365.9,847.8 1372.0,849.4"/>
<polyline points="880.0,832.5 886.2,833.7 892.3,832.0 898.5,833.0 904.6,830.4 910.8,830.6 916.9,831.2 923.1,831.5 929.2,829.8 935.4,828.7 941.5,827.9 947.7,828.9 953.8,827.4 960.0,829.0"/>
<polyline points="403,815 425.4,803.7 445,795"/>
<polyline points="378,848 398.1,840.2 420,830"/>
<polyline points="545,850 563.1,838.7 580,825"/>
<polyline points="745,773 751.9,762.5 760,755"/>
<polyline points="710,822 710.2,834.7 712,845"/>
<polyline points="380,752 388.1,746.4 398,742"/>
<polyline points="500,760 509.7,752.2 520,745"/>
<polyline points="775,880 787.1,879.7 800,876"/>
<polyline points="1030,745 1036.1,738.0 1045,735"/>
<polyline points="1140,812 1151.8,807.5 1160,800"/>
<polyline points="930,770 941.9,777.2 950,785"/>
<polyline points="1180,740 1191.8,736.7 1200,730"/>
</g>
<polygon points="736,156 1331,156 1322,165 1304,177 1303,191 1298,196 736,196" fill="#08759a"/>
<polygon points="751,196 761,196 785,251 769,251" fill="#08759a"/>
<polygon points="761,196 791,196 791,262 785,251" fill="#6e8a94"/>
<polygon points="767,196 773,196 791,240 791,250" fill="#021820"/>
<rect x="795" y="196" width="292" height="78" fill="#b9d0dc"/>
<rect x="1213" y="196" width="84" height="67" fill="#b9d0dc"/>
<rect x="795" y="274" width="292" height="439" fill="#d6d6d6"/>
<rect x="1213" y="263" width="84" height="552" fill="#d4d4d4"/>
<rect x="736" y="252" width="55" height="28" fill="#08759a"/>
<rect x="736" y="280" width="55" height="428" fill="#d6d6d6"/>
<rect x="736" y="708" width="55" height="21" fill="#dadada"/>
<rect x="791" y="196" width="4" height="517" fill="#7a7a7a"/>
<polygon points="343,600 368,600 368,718 343,733" fill="#808080"/>
<rect x="344" y="600" width="3" height="129" fill="#d0d0d0"/>
<rect x="368" y="600" width="103" height="117" fill="#353535"/>
<rect x="471" y="600" width="320" height="108" fill="#d6d6d6"/>
<rect x="471" y="708" width="320" height="20" fill="#dadada"/>
<polygon points="1087,196 1213,196 1213,263 1147,263 1133,274 1087,274" fill="#021820"/>
<rect x="953" y="289" width="134" height="410" fill="#000"/>
<rect x="963" y="299" width="124" height="390" fill="#d6d6d6"/>
<g fill="#e0c254">
<rect x="973" y="310" width="6" height="368"/><rect x="975" y="310" width="127" height="4"/>
<rect x="975" y="670" width="127" height="4"/><rect x="975" y="676" width="127" height="4"/>
<path d="M970,305 q4,-2 8,0 q5,-2 9,1 q5,-1 8,2 l4,2 h-8 q-6,0 -8,4 q-3,6 -7,8 l-2,5 v10 h-3 q-2,-3 0,-6 q-2,-4 0,-8 q-3,-8 -1,-18z"/>
<path d="M970,679 h26 l-4,-4 q-6,0 -8,-4 q-2,-6 -6,-8 l-2,-5 v-12 h-3 q-2,3 0,6 q-3,4 -1,9 q-3,8 -2,18z"/>
</g>
<polygon points="1087,274 1133,274 1147,263 1213,263 1213,845 1087,712" fill="#000"/>
<rect x="1087" y="670" width="15" height="4" fill="#e0c254"/><rect x="1087" y="676" width="15" height="4" fill="#e0c254"/><rect x="1087" y="310" width="15" height="4" fill="#e0c254"/>
<rect x="1087" y="298" width="15" height="1" fill="#444"/><rect x="1087" y="689" width="15" height="1" fill="#333"/>
<rect x="1297" y="253" width="75" height="10" fill="#0a78a0"/><rect x="1297" y="263" width="75" height="17" fill="#086c8a"/>
<rect x="1297" y="280" width="75" height="420" fill="#d4d4d4"/>
<rect x="1297" y="290" width="10" height="400" fill="#000"/>
<rect x="1326" y="290" width="10" height="400" fill="#000"/>
<rect x="1326" y="290" width="46" height="10" fill="#000"/>
<rect x="1347" y="310" width="4" height="370" fill="#e0c254"/>
<rect x="1347" y="310" width="25" height="4" fill="#e0c254"/>
<rect x="1347" y="676" width="25" height="4" fill="#e0c254"/>
<rect x="1362" y="680" width="10" height="12" fill="#000"/>
<rect x="1305" y="474" width="67" height="117" fill="#000" stroke="#3a5ad0" stroke-width="2"/>
<line x1="1308" y1="481.5" x2="1372" y2="481.5" stroke="#3050c0" stroke-width="1"/><line x1="1317" y1="484.5" x2="1372" y2="484.5" stroke="#2040b0" stroke-width="1.2"/><polyline points="1297,508 1333,509 1372,511" stroke="#1a3ab8" stroke-width="1" fill="none"/>
<path d="M1372,440 l-6,0 l-4,4 v8 l4,4 h6" stroke="#2040d0" stroke-width="1.3" fill="none"/>
<polygon points="1297,651 1340,651 1346,682 1372,690 1372,799 1297,799" fill="url(#dots)"/>
<polygon points="1297,632 1318,640 1330,651 1297,651" fill="#b8e4a0"/>
<line x1="1297" y1="652" x2="1348" y2="652" stroke="#ff7ab4" stroke-width="1.2"/>
<polygon points="1360,797 1372,790 1372,808" fill="#d090e0"/>
<rect x="1213" y="815" width="90" height="11" fill="#8a8a8a" stroke="#666" stroke-width="1"/>
<rect x="1213" y="826" width="92" height="22" fill="url(#noise)" stroke="#777" stroke-width="1"/>
<polygon points="1298,214 1372,172 1372,249 1298,249" fill="#dcf2fa"/>
<path d="M1349,205 q7,-6 14,0 l1,5 q2,3 1,7 q-1,5 -9,6 q-8,-1 -9,-6 q-1,-4 1,-7z" fill="#d8f020"/><path d="M1352,211 h8 M1350,215 h12 M1351,219 h10" stroke="#eef8a0" stroke-width="0.8" stroke-dasharray="1.5,1.5"/>
<g stroke="#1040e0" stroke-width="1.3" fill="none"><path d="M384.5,617 l-2,9 h6 M390.5,617 l-2,8"/><path d="M387,624.5 h31 M382,626.5 h38 M388,629 h28 l4,-3 l5,-2 h5 l4,3 l3,5 l4,2 h6 l2,-3 v-14"/><path d="M418.5,617 v8 M421.5,617 v6 M424.5,617 v7 M429,617 v6 M433,617 v6 M436.5,617 v8 M441,617 v10 M443.5,617 v17 M446,617 v16 M454.5,617 v14"/><path d="M432,626 l6,6 l6,3 l6,-3 l4,-3"/></g>
<path d="M394,617 h6 v3 l-4,2 h-3z" fill="#1040e0"/>
<line x1="736" y1="156.5" x2="1330" y2="156.5" stroke="#9ad8ec" stroke-width="1"/><line x1="1101.5" y1="196" x2="1101.5" y2="274" stroke="#c8f0f8" stroke-width="1"/>
<line x1="736" y1="162" x2="771" y2="252" stroke="#0a3a4c" stroke-width="1"/><line x1="740" y1="162" x2="776" y2="252" stroke="#2aa0c0" stroke-width="1"/>
<line x1="755" y1="186.5" x2="1146" y2="186.5" stroke="#b8dcea" stroke-width="1"/>
<g stroke="#0a7090" stroke-width="1.3" fill="none">
<line x1="343" y1="708.5" x2="791" y2="708.5"/>
<line x1="343" y1="755.5" x2="516" y2="755.5"/><line x1="697" y1="755.5" x2="1126" y2="755.5"/>
<line x1="343" y1="818.5" x2="1213" y2="818.5"/>
<line x1="471" y1="727.6" x2="343" y2="813.4"/>
<line x1="586.7" y1="727.6" x2="399.6" y2="909"/>
<line x1="702" y1="727.6" x2="596" y2="909"/>
<line x1="820" y1="713" x2="792" y2="909"/>
<line x1="791" y1="712" x2="762" y2="818"/>
<line x1="929" y1="713" x2="987" y2="909"/>
<line x1="1039" y1="713" x2="1183" y2="909"/>
<line x1="1305" y1="843" x2="1372" y2="900"/>
<line x1="1101.5" y1="274" x2="1101.5" y2="727"/>
<line x1="347.5" y1="600" x2="347.5" y2="745"/>
<polyline points="344,732 369,718 382,718"/>
<line x1="791.5" y1="196" x2="791.5" y2="713"/>
<line x1="1213" y1="196" x2="1213" y2="815"/>
<line x1="1297" y1="280" x2="1297" y2="632"/>
</g>
<g stroke="#ff7ab4" stroke-width="1.1" fill="none">
<polyline points="946.5,389 946.5,286 1102,286"/>
<polyline points="946.5,599 946.5,702 1102,702"/>
<polyline points="996,266 1011,243 1201,243"/><line x1="1011" y1="243" x2="1011" y2="374"/>
<polyline points="994,736 1011,769 1200,769"/><line x1="1011" y1="639" x2="1011" y2="769"/>
<line x1="1145" y1="757" x2="1206" y2="818"/><polyline points="1145,784 1206,852 1372,852"/><polyline points="1206,852 1206,819 1372,819"/>
<line x1="1298" y1="243" x2="1316" y2="243"/>
<polyline points="1312,607 1352,607 1372,612"/><line x1="1352" y1="607" x2="1352" y2="640"/>
<line x1="1297" y1="681" x2="1372" y2="681"/><line x1="963" y1="675" x2="969" y2="686"/><line x1="964" y1="318" x2="970" y2="310"/>
</g>
<g stroke="#a03040" stroke-width="1" fill="none"><line x1="1130" y1="175.5" x2="1225" y2="175.5"/><line x1="1225" y1="175" x2="1202" y2="191"/><line x1="1225.5" y1="139" x2="1225.5" y2="175" stroke="#707070"/></g>
<text x="1126" y="179" font-size="9" fill="#a03040" font-family="Liberation Sans">y</text><text x="1198" y="194" font-size="9" fill="#a03040" font-family="Liberation Sans">x</text>
<line x1="454" y1="619.5" x2="1372" y2="619.5" stroke="#1a3ab8" stroke-width="1.3"/>
<polyline points="736,262 743,274 1133,274 1147,263 1618,263" stroke="#18f0ff" stroke-width="2.2" fill="none" style="mix-blend-mode:lighten"/>
</g>
<line x1="1372" y1="263" x2="1618" y2="263" stroke="#18f0ff" stroke-width="2.2"/>
<g stroke="#ffff40" stroke-width="2" fill="none" stroke-linejoin="miter" style="mix-blend-mode:lighten">
<polyline points="106,600 106,820 98,823"/>
<polyline points="123,600 123,779 190,779 262,745.5 348.5,745.5 368,735 368,600"/>
<polyline points="471,600 471,745.5 792,745.5 797,730 1087,729 1210,870 1297.5,870 1297.5,745 1618,745"/>
<polyline points="736,252 793,252 796,265 1087,265 1211,157 1298,157 1298,251.5 1618,251.5"/>
<line x1="1298" y1="214" x2="1372" y2="172" stroke-width="1.4"/>
</g>
<line x1="343.5" y1="600" x2="343.5" y2="909" stroke="#f0f020" stroke-width="1.4"/>
<line x1="1371.5" y1="139" x2="1371.5" y2="909" stroke="#a8c420" stroke-width="1.2"/><line x1="736" y1="139.6" x2="1372" y2="139.6" stroke="#a8c420" stroke-width="1.2"/>
<g stroke-width="1.4" fill="none"><line x1="101" y1="884.5" x2="123" y2="884.5" stroke="#10a010"/><line x1="122.5" y1="884" x2="122.5" y2="860" stroke="#1030d0"/></g>
<text x="97" y="888" font-size="10" fill="#10a010" font-family="Liberation Sans">y</text><text x="122" y="860" font-size="10" fill="#1030d0" font-family="Liberation Sans">z</text><text x="123" y="885" font-size="10" fill="#d01010" font-family="Liberation Sans">x</text>
<rect x="98" y="139" width="636" height="381" fill="#363636"/>
<g stroke="#5a5a5a" stroke-width="1"><line x1="116.5" y1="139" x2="116.5" y2="520"/><line x1="135.5" y1="139" x2="135.5" y2="520"/><line x1="154.5" y1="139" x2="154.5" y2="520"/><line x1="173.5" y1="139" x2="173.5" y2="520"/><line x1="192.5" y1="139" x2="192.5" y2="520"/><line x1="211.5" y1="139" x2="211.5" y2="520"/><line x1="230.5" y1="139" x2="230.5" y2="520"/><line x1="249.5" y1="139" x2="249.5" y2="520"/><line x1="267.5" y1="139" x2="267.5" y2="520"/><line x1="286.5" y1="139" x2="286.5" y2="520"/><line x1="305.5" y1="139" x2="305.5" y2="520"/><line x1="324.5" y1="139" x2="324.5" y2="520"/><line x1="343.5" y1="139" x2="343.5" y2="520"/><line x1="362.5" y1="139" x2="362.5" y2="520"/><line x1="381.5" y1="139" x2="381.5" y2="520"/><line x1="400.5" y1="139" x2="400.5" y2="520"/><line x1="419.5" y1="139" x2="419.5" y2="520"/><line x1="438.5" y1="139" x2="438.5" y2="520"/><line x1="456.5" y1="139" x2="456.5" y2="520"/><line x1="475.5" y1="139" x2="475.5" y2="520"/><line x1="494.5" y1="139" x2="494.5" y2="520"/><line x1="513.5" y1="139" x2="513.5" y2="520"/><line x1="532.5" y1="139" x2="532.5" y2="520"/><line x1="551.5" y1="139" x2="551.5" y2="520"/><line x1="570.5" y1="139" x2="570.5" y2="520"/><line x1="589.5" y1="139" x2="589.5" y2="520"/><line x1="608.5" y1="139" x2="608.5" y2="520"/><line x1="627.5" y1="139" x2="627.5" y2="520"/><line x1="646.5" y1="139" x2="646.5" y2="520"/><line x1="664.5" y1="139" x2="664.5" y2="520"/><line x1="683.5" y1="139" x2="683.5" y2="520"/><line x1="702.5" y1="139" x2="702.5" y2="520"/><line x1="721.5" y1="139" x2="721.5" y2="520"/><line x1="98" y1="159.5" x2="734" y2="159.5"/><line x1="98" y1="178.5" x2="734" y2="178.5"/><line x1="98" y1="197.5" x2="734" y2="197.5"/><line x1="98" y1="216.5" x2="734" y2="216.5"/><line x1="98" y1="235.5" x2="734" y2="235.5"/><line x1="98" y1="254.5" x2="734" y2="254.5"/><line x1="98" y1="272.5" x2="734" y2="272.5"/><line x1="98" y1="291.5" x2="734" y2="291.5"/><line x1="98" y1="310.5" x2="734" y2="310.5"/><line x1="98" y1="329.5" x2="734" y2="329.5"/><line x1="98" y1="348.5" x2="734" y2="348.5"/><line x1="98" y1="367.5" x2="734" y2="367.5"/><line x1="98" y1="386.5" x2="734" y2="386.5"/><line x1="98" y1="405.5" x2="734" y2="405.5"/><line x1="98" y1="424.5" x2="734" y2="424.5"/><line x1="98" y1="443.5" x2="734" y2="443.5"/><line x1="98" y1="461.5" x2="734" y2="461.5"/><line x1="98" y1="480.5" x2="734" y2="480.5"/><line x1="98" y1="499.5" x2="734" y2="499.5"/><line x1="98" y1="518.5" x2="734" y2="518.5"/></g>
<line x1="98" y1="329.5" x2="734" y2="329.5" stroke="#000" stroke-width="1"/>
<line x1="475.5" y1="139" x2="475.5" y2="520" stroke="#000" stroke-width="1"/>
<g stroke-width="1.3"><line x1="122.5" y1="470" x2="122.5" y2="495" stroke="#10a010"/><line x1="123" y1="494.5" x2="148" y2="494.5" stroke="#c01010"/></g>
<text x="123" y="470" font-size="9" fill="#10a010" font-family="Liberation Sans">y</text><text x="123" y="495" font-size="8" fill="#1030c0" font-family="Liberation Sans">z</text><text x="148" y="495" font-size="9" fill="#c01010" font-family="Liberation Sans">x</text>
<rect x="98" y="520" width="636" height="2" fill="#84702c"/>
<rect x="98" y="522" width="636" height="4" fill="#464646"/>
<rect x="98" y="526" width="636" height="89" fill="#363636"/>
<g stroke="#5a5a5a" stroke-width="1"><line x1="116.5" y1="526" x2="116.5" y2="615"/><line x1="135.5" y1="526" x2="135.5" y2="615"/><line x1="154.5" y1="526" x2="154.5" y2="615"/><line x1="173.5" y1="526" x2="173.5" y2="615"/><line x1="192.5" y1="526" x2="192.5" y2="615"/><line x1="211.5" y1="526" x2="211.5" y2="615"/><line x1="230.5" y1="526" x2="230.5" y2="615"/><line x1="249.5" y1="526" x2="249.5" y2="615"/><line x1="267.5" y1="526" x2="267.5" y2="615"/><line x1="286.5" y1="526" x2="286.5" y2="615"/><line x1="305.5" y1="526" x2="305.5" y2="615"/><line x1="324.5" y1="526" x2="324.5" y2="615"/><line x1="343.5" y1="526" x2="343.5" y2="615"/><line x1="362.5" y1="526" x2="362.5" y2="615"/><line x1="381.5" y1="526" x2="381.5" y2="615"/><line x1="400.5" y1="526" x2="400.5" y2="615"/><line x1="419.5" y1="526" x2="419.5" y2="615"/><line x1="438.5" y1="526" x2="438.5" y2="615"/><line x1="456.5" y1="526" x2="456.5" y2="615"/><line x1="475.5" y1="526" x2="475.5" y2="615"/><line x1="494.5" y1="526" x2="494.5" y2="615"/><line x1="513.5" y1="526" x2="513.5" y2="615"/><line x1="532.5" y1="526" x2="532.5" y2="615"/><line x1="551.5" y1="526" x2="551.5" y2="615"/><line x1="570.5" y1="526" x2="570.5" y2="615"/><line x1="589.5" y1="526" x2="589.5" y2="615"/><line x1="608.5" y1="526" x2="608.5" y2="615"/><line x1="627.5" y1="526" x2="627.5" y2="615"/><line x1="646.5" y1="526" x2="646.5" y2="615"/><line x1="664.5" y1="526" x2="664.5" y2="615"/><line x1="683.5" y1="526" x2="683.5" y2="615"/><line x1="702.5" y1="526" x2="702.5" y2="615"/><line x1="721.5" y1="526" x2="721.5" y2="615"/><line x1="98" y1="529.5" x2="734" y2="529.5"/><line x1="98" y1="548.5" x2="734" y2="548.5"/><line x1="98" y1="567.5" x2="734" y2="567.5"/><line x1="98" y1="586.5" x2="734" y2="586.5"/><line x1="98" y1="605.5" x2="734" y2="605.5"/></g>
<line x1="475.5" y1="526" x2="475.5" y2="615" stroke="#000" stroke-width="1"/>
<rect x="98" y="615" width="638" height="2" fill="#84702c"/>
<rect x="734" y="139" width="2" height="478" fill="#84702c"/>
</g>
<text x="101" y="156" font-size="11" fill="#d6d6d6" letter-spacing="0.33" font-family="Liberation Sans" xml:space="preserve">[+] [Top ] [Standard ] [Wireframe ]</text>
<text x="101" y="545" font-size="11" fill="#d6d6d6" letter-spacing="0.33" font-family="Liberation Sans" xml:space="preserve">[+] [Left ] [Standard ] [Wireframe ]</text>
</svg>
<span class="t" style="left:7px;top:151px;font-size:12px;color:#e8e8e8;">Select</span>
<svg class="a" style="left:80px;top:171px" width="10" height="8"><path d="M1,1 l3,3 l-3,3 M5,1 l3,3 l-3,3" stroke="#5a5aa0" stroke-width="1.3" fill="none"/></svg>
<div class="a" style="left:0;top:201px;width:14px;height:20px;background:#5a8ac6"></div>
<svg class="a" style="left:0;top:201px" width="14" height="20"><circle cx="4" cy="10" r="7" fill="#d6d6d6" stroke="#2a2a2a" stroke-width="1"/></svg>
<div class="a" style="left:0;top:224px;width:14px;height:20px;background:#5a8ac6"></div>
<svg class="a" style="left:0;top:224px" width="14" height="20"><circle cx="2" cy="8" r="5.5" fill="#d6d6d6" stroke="#2a2a2a" stroke-width="1"/><rect x="1" y="9" width="11" height="9" fill="#d6d6d6" stroke="#2a2a2a" stroke-width="1"/></svg>
<div class="a" style="left:0;top:247px;width:14px;height:20px;background:#5a8ac6"></div>
<svg class="a" style="left:0;top:247px" width="14" height="20"><path d="M4,17 v-3 q-7,-5 -3,-10 q4,-4 8,0 q3,5 -3,10 v3z" fill="#d6d6d6"/><rect x="1" y="15" width="6" height="1.5" fill="#2a2a2a"/></svg>
<div class="a" style="left:0;top:270px;width:14px;height:20px;background:#5a8ac6"></div>
<svg class="a" style="left:0;top:270px" width="14" height="20"><rect x="-2" y="5" width="11" height="11" rx="2" fill="#d6d6d6"/><path d="M9,9 l4,-3 v10 l-4,-3z" fill="#d6d6d6"/></svg>
<div class="a" style="left:0;top:293px;width:14px;height:20px;background:#5a8ac6"></div>
<svg class="a" style="left:0;top:293px" width="14" height="20"><path d="M0,17 l0,-2 l14,0 l-14,-10" fill="none" stroke="#d6d6d6" stroke-width="2"/></svg>
<div class="a" style="left:0;top:316px;width:14px;height:20px;background:#5a8ac6"></div>
<svg class="a" style="left:0;top:316px" width="14" height="20"><path d="M0,6 q3,-3 7,0 t7,0 M0,10 q3,-3 7,0 t7,0 M0,14 q3,-3 7,0 t7,0" stroke="#d6d6d6" stroke-width="1.5" fill="none"/></svg>
<div class="a" style="left:0;top:339px;width:14px;height:20px;background:#5a8ac6"></div>
<svg class="a" style="left:0;top:339px" width="14" height="20"><rect x="0" y="3" width="13" height="14" fill="#40c4c8"/><rect x="2" y="5" width="9" height="10" fill="#d6d6d6" stroke="#2a2a2a"/><rect x="5" y="9" width="6" height="6" fill="#40c4c8" stroke="#2a2a2a"/></svg>
<div class="a" style="left:0;top:362px;width:14px;height:20px;background:#5a8ac6"></div>
<svg class="a" style="left:0;top:362px" width="14" height="20"><circle cx="6" cy="9" r="7" fill="#d6d6d6" stroke="#2a2a2a"/><path d="M3,9 h6 M6,6 v7 l-3,-3 M6,13 l3,-3" stroke="#40c4c8" stroke-width="2"/></svg>
<div class="a" style="left:0;top:385px;width:14px;height:20px;background:#5a8ac6"></div>
<svg class="a" style="left:0;top:385px" width="14" height="20"><path d="M0,3 l13,13 l-2,2 l-13,-13z" fill="#d6d6d6"/></svg>
<div class="a" style="left:0;top:408px;width:14px;height:20px;background:#5a8ac6"></div>
<svg class="a" style="left:0;top:408px" width="14" height="20"><rect x="-2" y="5" width="14" height="10" fill="#d6d6d6" stroke="#2a2a2a"/><rect x="-2" y="5" width="14" height="3" fill="#2a2a2a"/></svg>
<div class="a" style="left:0;top:431px;width:14px;height:20px;background:#5a8ac6"></div>
<svg class="a" style="left:0;top:431px" width="14" height="20"><circle cx="5" cy="10" r="6" fill="none" stroke="#d6d6d6" stroke-width="1.5" stroke-dasharray="2,1.5"/><circle cx="5" cy="10" r="2" fill="#d6d6d6"/></svg>
<div class="a" style="left:0;top:454px;width:14px;height:20px;background:#5a8ac6"></div>
<svg class="a" style="left:0;top:454px" width="14" height="20"><path d="M-1,10 q7,-7 14,0 q-7,7 -14,0z" fill="#d6d6d6"/><circle cx="6" cy="10" r="2.5" fill="#2a2a2a"/></svg>
<svg class="a" style="left:0;top:482px" width="16" height="70"><rect x="-2" y="2" width="14" height="14" fill="#d6d6d6"/><path d="M1,6 h8 M1,9 h8 M1,12 h6" stroke="#2a2a2a"/><rect x="0" y="26" width="11" height="13" fill="#d6d6d6"/><rect x="-2" y="48" width="14" height="14" fill="#d6d6d6" stroke="#2a2a2a"/><path d="M1,52 h8 M1,55 h8 M1,58 h6" stroke="#2a2a2a"/></svg>
<svg class="a" style="left:0;top:560px" width="16" height="60"><path d="M0,2 h12 l-5,8 v7 l-2,-2 v-5z" fill="#888"/><circle cx="10" cy="14" r="3" fill="none" stroke="#888" stroke-width="1.5"/><path d="M0,24 h12 l-5,8 v7 l-2,-2 v-5z" fill="#d6d6d6"/><path d="M0,47 h3 v-3 h3 v3 h3 v-3 h3 v10 h-12z" fill="none" stroke="#d6d6d6" stroke-width="1.3"/></svg>
<div class="a" style="left:0;top:478px;width:28px;height:1px;background:#2a2a2a"></div>
<div class="a" style="left:0;top:554px;width:28px;height:1px;background:#2a2a2a"></div>
<div class="a" style="left:17px;top:198px;width:74px;height:20px;background:#464646;border:1px solid #5a5a5a"></div>
<span class="t" style="left:19px;top:202px;font-size:11.5px;color:#e6e6e6;width:72px;overflow:hidden;letter-spacing:-0.35px">Name (Sorted A</span>
<div class="a" style="left:17px;top:218px;width:57px;height:648px;background:#424242"></div>
<div class="a" style="left:68px;top:218px;width:6px;height:648px;background:#505050"></div>
<div class="a" style="left:74px;top:218px;width:17px;height:648px;background:#efefef"></div>
<div class="a" style="left:75px;top:500px;width:15px;height:51px;background:#cdcdcd"></div>
<svg class="a" style="left:76px;top:222px" width="12" height="10"><path d="M2,7 l4,-4 l4,4" stroke="#333" stroke-width="1.6" fill="none"/></svg>
<svg class="a" style="left:76px;top:853px" width="12" height="10"><path d="M2,3 l4,4 l4,-4" stroke="#333" stroke-width="1.6" fill="none"/></svg>
<div class="a" style="left:17px;top:866px;width:74px;height:18px;background:#efefef"></div>
<div class="a" style="left:34px;top:867px;width:17px;height:15px;background:#cdcdcd"></div>
<svg class="a" style="left:18px;top:869px" width="72" height="12"><path d="M10,2 l-4,4 l4,4 M46,2 l4,4 l-4,4" stroke="#333" stroke-width="1.5" fill="none"/></svg>
<svg class="a" style="left:80px;top:887px" width="10" height="8"><path d="M1,1 l3,3 l-3,3 M5,1 l3,3 l-3,3" stroke="#5a5aa0" stroke-width="1.3" fill="none"/></svg>
<svg class="a" style="left:0;top:0" width="95" height="870"><line x1="27.5" y1="218" x2="27.5" y2="866" stroke="#666" stroke-dasharray="1,2"/><g transform="translate(0,227)"><path d="M29,0 h6" stroke="#777" stroke-width="1" stroke-dasharray="1,2"/><path d="M36,0 q7,-6 14,0 q-7,6 -14,0z" fill="#d0d0d0"/><circle cx="43" cy="0" r="2.3" fill="#333"/><circle cx="58" cy="0" r="5" fill="#d0d0d0"/></g><g transform="translate(0,245)"><path d="M29,0 h6" stroke="#777" stroke-width="1" stroke-dasharray="1,2"/><path d="M36,0 q7,-6 14,0 q-7,6 -14,0z" fill="#d0d0d0"/><circle cx="43" cy="0" r="2.3" fill="#333"/><circle cx="58" cy="0" r="5" fill="#d0d0d0"/></g><g transform="translate(0,263)"><path d="M29,0 h6" stroke="#777" stroke-width="1" stroke-dasharray="1,2"/><path d="M36,0 q7,-6 14,0 q-7,6 -14,0z" fill="#d0d0d0"/><circle cx="43" cy="0" r="2.3" fill="#333"/><circle cx="56" cy="-2" r="5" fill="#d0d0d0" stroke="#333" stroke-width="0.8"/><rect x="57" y="-1" width="8" height="8" fill="#d0d0d0" stroke="#333" stroke-width="0.9"/></g><g transform="translate(0,281)"><path d="M29,0 h6" stroke="#777" stroke-width="1" stroke-dasharray="1,2"/><path d="M36,0 q7,-6 14,0 q-7,6 -14,0z" fill="#d0d0d0"/><circle cx="43" cy="0" r="2.3" fill="#333"/><circle cx="56" cy="-2" r="5" fill="#d0d0d0" stroke="#333" stroke-width="0.8"/><rect x="57" y="-1" width="8" height="8" fill="#d0d0d0" stroke="#333" stroke-width="0.9"/></g><g transform="translate(0,299)"><path d="M29,0 h6" stroke="#777" stroke-width="1" stroke-dasharray="1,2"/><path d="M36,0 q7,-6 14,0 q-7,6 -14,0z" fill="#d0d0d0"/><circle cx="43" cy="0" r="2.3" fill="#333"/><circle cx="56" cy="-2" r="5" fill="#d0d0d0" stroke="#333" stroke-width="0.8"/><rect x="57" y="-1" width="8" height="8" fill="#d0d0d0" stroke="#333" stroke-width="0.9"/></g><g transform="translate(0,317)"><path d="M29,0 h6" stroke="#777" stroke-width="1" stroke-dasharray="1,2"/><path d="M36,0 q7,-6 14,0 q-7,6 -14,0z" fill="#d0d0d0"/><circle cx="43" cy="0" r="2.3" fill="#333"/><circle cx="56" cy="-2" r="5" fill="#d0d0d0" stroke="#333" stroke-width="0.8"/><rect x="57" y="-1" width="8" height="8" fill="#d0d0d0" stroke="#333" stroke-width="0.9"/></g><g transform="translate(0,335)"><path d="M29,0 h6" stroke="#777" stroke-width="1" stroke-dasharray="1,2"/><path d="M36,0 q7,-6 14,0 q-7,6 -14,0z" fill="#d0d0d0"/><circle cx="43" cy="0" r="2.3" fill="#333"/><circle cx="56" cy="-2" r="5" fill="#d0d0d0" stroke="#333" stroke-width="0.8"/><rect x="57" y="-1" width="8" height="8" fill="#d0d0d0" stroke="#333" stroke-width="0.9"/></g><g transform="translate(0,353)"><path d="M29,0 h6" stroke="#777" stroke-width="1" stroke-dasharray="1,2"/><path d="M36,0 q7,-6 14,0 q-7,6 -14,0z" fill="#d0d0d0"/><circle cx="43" cy="0" r="2.3" fill="#333"/><circle cx="56" cy="-2" r="5" fill="#d0d0d0" stroke="#333" stroke-width="0.8"/><rect x="57" y="-1" width="8" height="8" fill="#d0d0d0" stroke="#333" stroke-width="0.9"/></g><g transform="translate(0,371)"><path d="M29,0 h6" stroke="#777" stroke-width="1" stroke-dasharray="1,2"/><path d="M36,0 q7,-6 14,0 q-7,6 -14,0z" fill="#d0d0d0"/><circle cx="43" cy="0" r="2.3" fill="#333"/><circle cx="56" cy="-2" r="5" fill="#d0d0d0" stroke="#333" stroke-width="0.8"/><rect x="57" y="-1" width="8" height="8" fill="#d0d0d0" stroke="#333" stroke-width="0.9"/></g><g transform="translate(0,389)"><path d="M29,0 h6" stroke="#777" stroke-width="1" stroke-dasharray="1,2"/><path d="M36,0 q7,-6 14,0 q-7,6 -14,0z" fill="#d0d0d0"/><circle cx="43" cy="0" r="2.3" fill="#333"/><circle cx="58" cy="0" r="5" fill="#d0d0d0"/></g><g transform="translate(0,407)"><path d="M29,0 h6" stroke="#777" stroke-width="1" stroke-dasharray="1,2"/><path d="M36,0 q7,-6 14,0 q-7,6 -14,0z" fill="#d0d0d0"/><circle cx="43" cy="0" r="2.3" fill="#333"/><circle cx="58" cy="0" r="5" fill="#d0d0d0"/></g><g transform="translate(0,425)"><path d="M29,0 h6" stroke="#777" stroke-width="1" stroke-dasharray="1,2"/><path d="M36,0 q7,-6 14,0 q-7,6 -14,0z" fill="#d0d0d0"/><circle cx="43" cy="0" r="2.3" fill="#333"/><circle cx="58" cy="0" r="5" fill="#d0d0d0"/></g><g transform="translate(0,443)"><path d="M29,0 h6" stroke="#777" stroke-width="1" stroke-dasharray="1,2"/><path d="M36,0 q7,-6 14,0 q-7,6 -14,0z" fill="#d0d0d0"/><circle cx="43" cy="0" r="2.3" fill="#333"/><circle cx="58" cy="0" r="5" fill="#d0d0d0"/></g><g transform="translate(0,461)"><path d="M29,0 h6" stroke="#777" stroke-width="1" stroke-dasharray="1,2"/><path d="M36,0 q7,-6 14,0 q-7,6 -14,0z" fill="#d0d0d0"/><circle cx="43" cy="0" r="2.3" fill="#333"/><circle cx="58" cy="0" r="5" fill="#d0d0d0"/></g><g transform="translate(0,479)"><path d="M29,0 h6" stroke="#777" stroke-width="1" stroke-dasharray="1,2"/><path d="M36,0 q7,-6 14,0 q-7,6 -14,0z" fill="#d0d0d0"/><circle cx="43" cy="0" r="2.3" fill="#333"/><circle cx="58" cy="0" r="5" fill="#d0d0d0"/></g><g transform="translate(0,497)"><path d="M29,0 h6" stroke="#777" stroke-width="1" stroke-dasharray="1,2"/><path d="M36,0 q7,-6 14,0 q-7,6 -14,0z" fill="#d0d0d0"/><circle cx="43" cy="0" r="2.3" fill="#333"/><circle cx="58" cy="0" r="5" fill="#d0d0d0"/></g><g transform="translate(0,515)"><path d="M29,0 h6" stroke="#777" stroke-width="1" stroke-dasharray="1,2"/><path d="M36,0 q7,-6 14,0 q-7,6 -14,0z" fill="#d0d0d0"/><circle cx="43" cy="0" r="2.3" fill="#333"/><circle cx="58" cy="0" r="5" fill="#d0d0d0"/></g><g transform="translate(0,533)"><path d="M29,0 h6" stroke="#777" stroke-width="1" stroke-dasharray="1,2"/><path d="M36,0 q7,-6 14,0 q-7,6 -14,0z" fill="#d0d0d0"/><circle cx="43" cy="0" r="2.3" fill="#333"/><circle cx="58" cy="0" r="5" fill="#d0d0d0"/></g><g transform="translate(0,551)"><path d="M29,0 h6" stroke="#777" stroke-width="1" stroke-dasharray="1,2"/><path d="M36,0 q7,-6 14,0 q-7,6 -14,0z" fill="#d0d0d0"/><circle cx="43" cy="0" r="2.3" fill="#333"/><circle cx="58" cy="0" r="5" fill="#d0d0d0"/></g><g transform="translate(0,569)"><path d="M29,0 h6" stroke="#777" stroke-width="1" stroke-dasharray="1,2"/><path d="M36,0 q7,-6 14,0 q-7,6 -14,0z" fill="#d0d0d0"/><circle cx="43" cy="0" r="2.3" fill="#333"/><circle cx="58" cy="0" r="5" fill="#d0d0d0"/></g><g transform="translate(0,587)"><path d="M29,0 h6" stroke="#777" stroke-width="1" stroke-dasharray="1,2"/><path d="M36,0 q7,-6 14,0 q-7,6 -14,0z" fill="#d0d0d0"/><circle cx="43" cy="0" r="2.3" fill="#333"/><circle cx="58" cy="0" r="5" fill="#d0d0d0"/></g><g transform="translate(0,605)"><path d="M29,0 h6" stroke="#777" stroke-width="1" stroke-dasharray="1,2"/><path d="M36,0 q7,-6 14,0 q-7,6 -14,0z" fill="#d0d0d0"/><circle cx="43" cy="0" r="2.3" fill="#333"/><circle cx="58" cy="0" r="5" fill="#d0d0d0"/></g><g transform="translate(0,623)"><path d="M29,0 h6" stroke="#777" stroke-width="1" stroke-dasharray="1,2"/><path d="M36,0 q7,-6 14,0 q-7,6 -14,0z" fill="#d0d0d0"/><circle cx="43" cy="0" r="2.3" fill="#333"/><circle cx="58" cy="0" r="5" fill="#d0d0d0"/></g><g transform="translate(0,641)"><path d="M29,0 h6" stroke="#777" stroke-width="1" stroke-dasharray="1,2"/><path d="M36,0 q7,-6 14,0 q-7,6 -14,0z" fill="#d0d0d0"/><circle cx="43" cy="0" r="2.3" fill="#333"/><circle cx="58" cy="0" r="5" fill="#d0d0d0"/></g><g transform="translate(0,659)"><path d="M29,0 h6" stroke="#777" stroke-width="1" stroke-dasharray="1,2"/><path d="M36,0 q7,-6 14,0 q-7,6 -14,0z" fill="#d0d0d0"/><circle cx="43" cy="0" r="2.3" fill="#333"/><circle cx="58" cy="0" r="5" fill="#d0d0d0"/></g><g transform="translate(0,677)"><path d="M29,0 h6" stroke="#777" stroke-width="1" stroke-dasharray="1,2"/><path d="M36,0 q7,-6 14,0 q-7,6 -14,0z" fill="#d0d0d0"/><circle cx="43" cy="0" r="2.3" fill="#333"/><circle cx="58" cy="0" r="5" fill="#d0d0d0"/></g><g transform="translate(0,695)"><path d="M29,0 h6" stroke="#777" stroke-width="1" stroke-dasharray="1,2"/><path d="M36,0 q7,-6 14,0 q-7,6 -14,0z" fill="#d0d0d0"/><circle cx="43" cy="0" r="2.3" fill="#333"/><circle cx="58" cy="0" r="5" fill="#d0d0d0"/></g><g transform="translate(0,713)"><path d="M29,0 h6" stroke="#777" stroke-width="1" stroke-dasharray="1,2"/><path d="M36,0 q7,-6 14,0 q-7,6 -14,0z" fill="#d0d0d0"/><circle cx="43" cy="0" r="2.3" fill="#333"/><circle cx="58" cy="0" r="5" fill="#d0d0d0"/></g><g transform="translate(0,731)"><path d="M29,0 h6" stroke="#777" stroke-width="1" stroke-dasharray="1,2"/><path d="M36,0 q7,-6 14,0 q-7,6 -14,0z" fill="#d0d0d0"/><circle cx="43" cy="0" r="2.3" fill="#333"/><circle cx="58" cy="0" r="5" fill="#d0d0d0"/></g><g transform="translate(0,749)"><path d="M29,0 h6" stroke="#777" stroke-width="1" stroke-dasharray="1,2"/><path d="M36,0 q7,-6 14,0 q-7,6 -14,0z" fill="#d0d0d0"/><circle cx="43" cy="0" r="2.3" fill="#333"/><circle cx="58" cy="0" r="5" fill="#d0d0d0"/></g><g transform="translate(0,767)"><path d="M29,0 h6" stroke="#777" stroke-width="1" stroke-dasharray="1,2"/><path d="M36,0 q7,-6 14,0 q-7,6 -14,0z" fill="#d0d0d0"/><circle cx="43" cy="0" r="2.3" fill="#333"/><circle cx="58" cy="0" r="5" fill="#d0d0d0"/></g><g transform="translate(0,785)"><path d="M29,0 h6" stroke="#777" stroke-width="1" stroke-dasharray="1,2"/><path d="M36,0 q7,-6 14,0 q-7,6 -14,0z" fill="#d0d0d0"/><circle cx="43" cy="0" r="2.3" fill="#333"/><circle cx="58" cy="0" r="5" fill="#d0d0d0"/></g><g transform="translate(0,803)"><path d="M29,0 h6" stroke="#777" stroke-width="1" stroke-dasharray="1,2"/><path d="M36,0 q7,-6 14,0 q-7,6 -14,0z" fill="#d0d0d0"/><circle cx="43" cy="0" r="2.3" fill="#333"/><circle cx="58" cy="0" r="5" fill="#d0d0d0"/></g><g transform="translate(0,821)"><path d="M29,0 h6" stroke="#777" stroke-width="1" stroke-dasharray="1,2"/><path d="M36,0 q7,-6 14,0 q-7,6 -14,0z" fill="#d0d0d0"/><circle cx="43" cy="0" r="2.3" fill="#333"/><circle cx="58" cy="0" r="5" fill="#d0d0d0"/></g><g transform="translate(0,839)"><path d="M29,0 h6" stroke="#777" stroke-width="1" stroke-dasharray="1,2"/><path d="M36,0 q7,-6 14,0 q-7,6 -14,0z" fill="#d0d0d0"/><circle cx="43" cy="0" r="2.3" fill="#333"/><circle cx="58" cy="0" r="5" fill="#d0d0d0"/></g><g transform="translate(0,857)"><path d="M29,0 h6" stroke="#777" stroke-width="1" stroke-dasharray="1,2"/><path d="M36,0 q7,-6 14,0 q-7,6 -14,0z" fill="#d0d0d0"/><circle cx="43" cy="0" r="2.3" fill="#333"/><circle cx="58" cy="0" r="5" fill="#d0d0d0"/></g></svg>
<span class="t" style="left:69px;top:221px;font-size:11px;color:#e6e0b0;width:5px;overflow:hidden">F</span>
<span class="t" style="left:69px;top:239px;font-size:11px;color:#e6e0b0;width:5px;overflow:hidden">F</span>
<span class="t" style="left:69px;top:257px;font-size:11px;color:#e6e0b0;width:5px;overflow:hidden">F</span>
<span class="t" style="left:69px;top:275px;font-size:11px;color:#e6e0b0;width:5px;overflow:hidden">F</span>
<span class="t" style="left:69px;top:293px;font-size:11px;color:#e6e0b0;width:5px;overflow:hidden">F</span>
<span class="t" style="left:69px;top:311px;font-size:11px;color:#e6e0b0;width:5px;overflow:hidden">F</span>
<span class="t" style="left:69px;top:329px;font-size:11px;color:#e6e0b0;width:5px;overflow:hidden">F</span>
<span class="t" style="left:69px;top:347px;font-size:11px;color:#e6e0b0;width:5px;overflow:hidden">F</span>
<span class="t" style="left:69px;top:365px;font-size:11px;color:#e6e0b0;width:5px;overflow:hidden">F</span>
<span class="t" style="left:69px;top:383px;font-size:11px;color:#e6e0b0;width:5px;overflow:hidden">m</span>
<span class="t" style="left:69px;top:401px;font-size:11px;color:#e6e0b0;width:5px;overflow:hidden">m</span>
<span class="t" style="left:69px;top:419px;font-size:11px;color:#e6e0b0;width:5px;overflow:hidden">m</span>
<span class="t" style="left:69px;top:437px;font-size:11px;color:#e6e0b0;width:5px;overflow:hidden">m</span>
<span class="t" style="left:69px;top:455px;font-size:11px;color:#e6e0b0;width:5px;overflow:hidden">s</span>
<span class="t" style="left:69px;top:473px;font-size:11px;color:#e6e0b0;width:5px;overflow:hidden">s</span>
<span class="t" style="left:69px;top:491px;font-size:11px;color:#e6e0b0;width:5px;overflow:hidden">s</span>
<span class="t" style="left:69px;top:509px;font-size:11px;color:#e6e0b0;width:5px;overflow:hidden">s</span>
<span class="t" style="left:69px;top:527px;font-size:11px;color:#e6e0b0;width:5px;overflow:hidden">s</span>
<span class="t" style="left:69px;top:545px;font-size:11px;color:#e6e0b0;width:5px;overflow:hidden">s</span>
<span class="t" style="left:69px;top:563px;font-size:11px;color:#e6e0b0;width:5px;overflow:hidden">s</span>
<span class="t" style="left:69px;top:581px;font-size:11px;color:#e6e0b0;width:5px;overflow:hidden">s</span>
<span class="t" style="left:69px;top:599px;font-size:11px;color:#e6e0b0;width:5px;overflow:hidden">s</span>
<span class="t" style="left:69px;top:617px;font-size:11px;color:#e6e0b0;width:5px;overflow:hidden">s</span>
<span class="t" style="left:69px;top:635px;font-size:11px;color:#e6e0b0;width:5px;overflow:hidden">s</span>
<span class="t" style="left:69px;top:653px;font-size:11px;color:#e6e0b0;width:5px;overflow:hidden">s</span>
<span class="t" style="left:69px;top:671px;font-size:11px;color:#e6e0b0;width:5px;overflow:hidden">s</span>
<span class="t" style="left:69px;top:689px;font-size:11px;color:#e6e0b0;width:5px;overflow:hidden">s</span>
<span class="t" style="left:69px;top:707px;font-size:11px;color:#e6e0b0;width:5px;overflow:hidden">s</span>
<span class="t" style="left:69px;top:725px;font-size:11px;color:#e6e0b0;width:5px;overflow:hidden">s</span>
<span class="t" style="left:69px;top:743px;font-size:11px;color:#e6e0b0;width:5px;overflow:hidden">s</span>
<span class="t" style="left:69px;top:761px;font-size:11px;color:#e6e0b0;width:5px;overflow:hidden">s</span>
<span class="t" style="left:69px;top:779px;font-size:11px;color:#e6e0b0;width:5px;overflow:hidden">s</span>
<span class="t" style="left:69px;top:797px;font-size:11px;color:#e6e0b0;width:5px;overflow:hidden">s</span>
<span class="t" style="left:69px;top:815px;font-size:11px;color:#e6e0b0;width:5px;overflow:hidden">s</span>
<span class="t" style="left:69px;top:833px;font-size:11px;color:#e6e0b0;width:5px;overflow:hidden">s</span>
<span class="t" style="left:69px;top:851px;font-size:11px;color:#e6e0b0;width:5px;overflow:hidden">s</span>
<div class="a" style="left:1624px;top:145px;width:170px;height:766px;border:1px solid #393939;border-radius:5px;background:#434343"></div>
<div class="a" style="left:1625px;top:146px;width:30px;height:27px;background:#4a4a4a;border-radius:4px 4px 0 0"></div>
<div class="a" style="left:1657px;top:146px;width:30px;height:27px;background:#404040;border-radius:4px 4px 0 0"></div>
<div class="a" style="left:1689px;top:146px;width:30px;height:27px;background:#404040;border-radius:4px 4px 0 0"></div>
<div class="a" style="left:1721px;top:146px;width:30px;height:27px;background:#404040;border-radius:4px 4px 0 0"></div>
<div class="a" style="left:1752px;top:146px;width:30px;height:27px;background:#404040;border-radius:4px 4px 0 0"></div>
<div class="a" style="left:1784px;top:146px;width:30px;height:27px;background:#404040;border-radius:4px 4px 0 0"></div>
<div class="a" style="left:1625px;top:173px;width:163px;height:1px;background:#4a4a4a"></div>
<svg class="a" style="left:1630px;top:149px" width="20" height="20"><path d="M10,2 v16 M2,10 h16" stroke="#eee" stroke-width="2"/></svg>
<svg class="a" style="left:1656px;top:146px" width="130" height="27"><g transform="translate(7,5)"><rect x="2" y="2" width="14" height="14" fill="none" stroke="#40c4c8" stroke-width="1.2" stroke-dasharray="2,2"/><path d="M4,14 q0,-9 10,-10" stroke="#bbb" stroke-width="2" fill="none"/><rect x="0.5" y="0.5" width="3" height="3" fill="none" stroke="#40c4c8"/><rect x="14" y="0.5" width="3" height="3" fill="none" stroke="#40c4c8"/><rect x="0.5" y="14" width="3" height="3" fill="none" stroke="#40c4c8"/><rect x="14" y="14" width="3" height="3" fill="none" stroke="#40c4c8"/></g><g transform="translate(39,5)"><rect x="5" y="1" width="8" height="5" fill="#bbb"/><path d="M9,6 v4 M3,10 h12 M3,10 v4 M15,10 v4" stroke="#40c4c8" stroke-width="1.5" fill="none"/><rect x="0" y="13" width="5" height="4" fill="#40c4c8"/><rect x="13" y="13" width="5" height="4" fill="#40c4c8"/></g><g transform="translate(71,5)"><circle cx="11" cy="9" r="7" fill="#bbb"/><path d="M5,3 a8,8 0 0 0 0,12 M2,4 a9,9 0 0 0 0,10" stroke="#40c4c8" stroke-width="1.5" fill="none"/></g><g transform="translate(102,5)"><rect x="1" y="3" width="17" height="10" fill="#bbb"/><rect x="8" y="13" width="3" height="3" fill="#bbb"/><rect x="5" y="16" width="9" height="2" fill="#bbb"/></g></svg>
<div class="a" style="left:1630px;top:178px;width:22px;height:22px;background:#5a8ac6;border-radius:3px"></div>
<svg class="a" style="left:1630px;top:178px" width="158" height="22"><circle cx="11" cy="11" r="7.5" fill="#d6d6d6" stroke="#333" stroke-width="1"/><circle cx="32" cy="9" r="5" fill="#d0d0d0" stroke="#333" stroke-width="0.8"/><rect x="33" y="10" width="8" height="8" fill="#d0d0d0" stroke="#333" stroke-width="0.8"/><path d="M59,16 v-2 q-5,-4 -3,-8 q3,-4 7,0 q2,4 -3,8 v2z" fill="#d0d0d0"/><path d="M76,6 h10 v11 h-10z M86,9 l4,-3 v11 l-4,-3z" fill="#d0d0d0"/><path d="M99,18 l0,-14 l12,14z" fill="none" stroke="#d0d0d0" stroke-width="2"/><path d="M122,7 q3,-3 6,0 t6,0 M122,11 q3,-3 6,0 t6,0 M122,15 q3,-3 6,0 t6,0" stroke="#d0d0d0" stroke-width="1.3" fill="none"/><circle cx="150" cy="8" r="3" fill="none" stroke="#d0d0d0" stroke-width="1.5"/><circle cx="155" cy="14" r="3" fill="none" stroke="#d0d0d0" stroke-width="1.5"/></svg>
<div class="a" style="left:1629px;top:207px;width:160px;height:20px;background:#666;border:1px solid #555"></div>
<span class="t" style="left:1633px;top:211px;font-size:11px;color:#e6e6e6;">Standard Primitives</span>
<div class="a" style="left:1629px;top:233px;width:160px;height:168px;background:#4a4a4a;border:1px solid #3c3c3c;border-radius:3px"></div>
<svg class="a" style="left:1634px;top:239px" width="9" height="7"><path d="M0,0 h8 l-4,6z" fill="#aaa"/></svg>
<span class="t" style="left:1647px;top:236px;font-size:12px;color:#f0f0f0;font-weight:bold">Object Type</span>
<div class="a" style="left:1695px;top:257px;width:10px;height:10px;background:#4e4e4e;border:1px solid #3a3a3a"></div>
<span class="t" style="left:1708px;top:256px;font-size:11px;color:#8a8a8a;">AutoGrid</span>
<div class="a" style="left:1670px;top:274px;width:67px;height:17px;background:#5e5e5e;border:1px solid #3c3c3c;border-radius:2px"></div>
<span class="t" style="left:1670px;top:276px;width:67px;text-align:center;font-size:11px;color:#e6e6e6">Box</span>
<div class="a" style="left:1670px;top:295px;width:67px;height:17px;background:#5e5e5e;border:1px solid #3c3c3c;border-radius:2px"></div>
<span class="t" style="left:1670px;top:297px;width:67px;text-align:center;font-size:11px;color:#e6e6e6">Sphere</span>
<div class="a" style="left:1670px;top:316px;width:67px;height:17px;background:#5e5e5e;border:1px solid #3c3c3c;border-radius:2px"></div>
<span class="t" style="left:1670px;top:318px;width:67px;text-align:center;font-size:11px;color:#e6e6e6">Cylinder</span>
<div class="a" style="left:1670px;top:337px;width:67px;height:17px;background:#5e5e5e;border:1px solid #3c3c3c;border-radius:2px"></div>
<span class="t" style="left:1670px;top:339px;width:67px;text-align:center;font-size:11px;color:#e6e6e6">Torus</span>
<div class="a" style="left:1670px;top:358px;width:67px;height:17px;background:#5e5e5e;border:1px solid #3c3c3c;border-radius:2px"></div>
<span class="t" style="left:1670px;top:360px;width:67px;text-align:center;font-size:11px;color:#e6e6e6">Teapot</span>
<div class="a" style="left:1670px;top:379px;width:67px;height:17px;background:#5e5e5e;border:1px solid #3c3c3c;border-radius:2px"></div>
<span class="t" style="left:1670px;top:381px;width:67px;text-align:center;font-size:11px;color:#e6e6e6">TextPlus</span>
<div class="a" style="left:1748px;top:274px;width:67px;height:17px;background:#5e5e5e;border:1px solid #3c3c3c;border-radius:2px"></div>
<span class="t" style="left:1748px;top:276px;width:67px;text-align:center;font-size:11px;color:#e6e6e6">Cone</span>
<div class="a" style="left:1748px;top:295px;width:67px;height:17px;background:#5e5e5e;border:1px solid #3c3c3c;border-radius:2px"></div>
<span class="t" style="left:1748px;top:297px;width:67px;text-align:center;font-size:11px;color:#e6e6e6">GeoSphere</span>
<div class="a" style="left:1748px;top:316px;width:67px;height:17px;background:#5e5e5e;border:1px solid #3c3c3c;border-radius:2px"></div>
<span class="t" style="left:1748px;top:318px;width:67px;text-align:center;font-size:11px;color:#e6e6e6">Tube</span>
<div class="a" style="left:1748px;top:337px;width:67px;height:17px;background:#5e5e5e;border:1px solid #3c3c3c;border-radius:2px"></div>
<span class="t" style="left:1748px;top:339px;width:67px;text-align:center;font-size:11px;color:#e6e6e6">Pyramid</span>
<div class="a" style="left:1748px;top:358px;width:67px;height:17px;background:#5e5e5e;border:1px solid #3c3c3c;border-radius:2px"></div>
<span class="t" style="left:1748px;top:360px;width:67px;text-align:center;font-size:11px;color:#e6e6e6">Plane</span>
<div class="a" style="left:1629px;top:404px;width:160px;height:57px;background:#4a4a4a;border:1px solid #3c3c3c;border-radius:3px"></div>
<svg class="a" style="left:1634px;top:410px" width="9" height="7"><path d="M0,0 h8 l-4,6z" fill="#aaa"/></svg>
<span class="t" style="left:1647px;top:407px;font-size:12px;color:#f0f0f0;font-weight:bold">Name and Color</span>
<div class="a" style="left:1667px;top:430px;width:121px;height:20px;background:#555;border:1px solid #444"></div>
<span class="t" style="left:1670px;top:434px;font-size:11px;color:#e0e0e0;">Rectangle1174528731</span>
<div class="a" style="left:-6px;top:917px;width:103px;height:16px;background:#5f5f5f;border-radius:3px"></div>
<span class="t" style="left:17px;top:919px;font-size:11px;color:#dcdcdc;">0 / 100</span>
<div class="a" style="left:99px;top:917px;width:14px;height:16px;background:#5a5a5a;border-radius:3px"></div>
<span class="t" style="left:102px;top:919px;font-size:11px;color:#dcdcdc;">&gt;</span>
<div class="a" style="left:0;top:937px;width:1788px;height:1px;background:#141414"></div>
<div class="a" style="left:0;top:938px;width:1788px;height:25px;background:#2a2a2a"></div>
<svg class="a" style="left:0;top:0" width="1788" height="967"><rect x="7" y="938" width="7" height="25" fill="#1c1c1c"/><rect x="11" y="940" width="7" height="23" fill="#a09a38"/><line x1="14.4" y1="938" x2="14.4" y2="950" stroke="#a0a0a0" stroke-width="1"/><line x1="14.4" y1="961" x2="14.4" y2="963" stroke="#a0a0a0" stroke-width="1"/><line x1="32.4" y1="938" x2="32.4" y2="950" stroke="#a0a0a0" stroke-width="1"/><line x1="50.3" y1="938" x2="50.3" y2="950" stroke="#a0a0a0" stroke-width="1"/><line x1="68.3" y1="938" x2="68.3" y2="950" stroke="#a0a0a0" stroke-width="1"/><line x1="86.3" y1="938" x2="86.3" y2="950" stroke="#a0a0a0" stroke-width="1"/><line x1="104.2" y1="938" x2="104.2" y2="950" stroke="#a0a0a0" stroke-width="1"/><line x1="104.2" y1="961" x2="104.2" y2="963" stroke="#a0a0a0" stroke-width="1"/><line x1="122.2" y1="938" x2="122.2" y2="950" stroke="#a0a0a0" stroke-width="1"/><line x1="140.1" y1="938" x2="140.1" y2="950" stroke="#a0a0a0" stroke-width="1"/><line x1="158.1" y1="938" x2="158.1" y2="950" stroke="#a0a0a0" stroke-width="1"/><line x1="176.1" y1="938" x2="176.1" y2="950" stroke="#a0a0a0" stroke-width="1"/><line x1="194.0" y1="938" x2="194.0" y2="950" stroke="#a0a0a0" stroke-width="1"/><line x1="194.0" y1="961" x2="194.0" y2="963" stroke="#a0a0a0" stroke-width="1"/><line x1="212.0" y1="938" x2="212.0" y2="950" stroke="#a0a0a0" stroke-width="1"/><line x1="230.0" y1="938" x2="230.0" y2="950" stroke="#a0a0a0" stroke-width="1"/><line x1="247.9" y1="938" x2="247.9" y2="950" stroke="#a0a0a0" stroke-width="1"/><line x1="265.9" y1="938" x2="265.9" y2="950" stroke="#a0a0a0" stroke-width="1"/><line x1="283.9" y1="938" x2="283.9" y2="950" stroke="#a0a0a0" stroke-width="1"/><line x1="283.9" y1="961" x2="283.9" y2="963" stroke="#a0a0a0" stroke-width="1"/><line x1="301.8" y1="938" x2="301.8" y2="950" stroke="#a0a0a0" stroke-width="1"/><line x1="319.8" y1="938" x2="319.8" y2="950" stroke="#a0a0a0" stroke-width="1"/><line x1="337.8" y1="938" x2="337.8" y2="950" stroke="#a0a0a0" stroke-width="1"/><line x1="355.7" y1="938" x2="355.7" y2="950" stroke="#a0a0a0" stroke-width="1"/><line x1="373.7" y1="938" x2="373.7" y2="950" stroke="#a0a0a0" stroke-width="1"/><line x1="373.7" y1="961" x2="373.7" y2="963" stroke="#a0a0a0" stroke-width="1"/><line x1="391.6" y1="938" x2="391.6" y2="950" stroke="#a0a0a0" stroke-width="1"/><line x1="409.6" y1="938" x2="409.6" y2="950" stroke="#a0a0a0" stroke-width="1"/><line x1="427.6" y1="938" x2="427.6" y2="950" stroke="#a0a0a0" stroke-width="1"/><line x1="445.5" y1="938" x2="445.5" y2="950" stroke="#a0a0a0" stroke-width="1"/><line x1="463.5" y1="938" x2="463.5" y2="950" stroke="#a0a0a0" stroke-width="1"/><line x1="463.5" y1="961" x2="463.5" y2="963" stroke="#a0a0a0" stroke-width="1"/><line x1="481.5" y1="938" x2="481.5" y2="950" stroke="#a0a0a0" stroke-width="1"/><line x1="499.4" y1="938" x2="499.4" y2="950" stroke="#a0a0a0" stroke-width="1"/><line x1="517.4" y1="938" x2="517.4" y2="950" stroke="#a0a0a0" stroke-width="1"/><line x1="535.4" y1="938" x2="535.4" y2="950" stroke="#a0a0a0" stroke-width="1"/><line x1="553.3" y1="938" x2="553.3" y2="950" stroke="#a0a0a0" stroke-width="1"/><line x1="553.3" y1="961" x2="553.3" y2="963" stroke="#a0a0a0" stroke-width="1"/><line x1="571.3" y1="938" x2="571.3" y2="950" stroke="#a0a0a0" stroke-width="1"/><line x1="589.2" y1="938" x2="589.2" y2="950" stroke="#a0a0a0" stroke-width="1"/><line x1="607.2" y1="938" x2="607.2" y2="950" stroke="#a0a0a0" stroke-width="1"/><line x1="625.2" y1="938" x2="625.2" y2="950" stroke="#a0a0a0" stroke-width="1"/><line x1="643.1" y1="938" x2="643.1" y2="950" stroke="#a0a0a0" stroke-width="1"/><line x1="643.1" y1="961" x2="643.1" y2="963" stroke="#a0a0a0" stroke-width="1"/><line x1="661.1" y1="938" x2="661.1" y2="950" stroke="#a0a0a0" stroke-width="1"/><line x1="679.1" y1="938" x2="679.1" y2="950" stroke="#a0a0a0" stroke-width="1"/><line x1="697.0" y1="938" x2="697.0" y2="950" stroke="#a0a0a0" stroke-width="1"/><line x1="715.0" y1="938" x2="715.0" y2="950" stroke="#a0a0a0" stroke-width="1"/><line x1="733.0" y1="938" x2="733.0" y2="950" stroke="#a0a0a0" stroke-width="1"/><line x1="733.0" y1="961" x2="733.0" y2="963" stroke="#a0a0a0" stroke-width="1"/><line x1="750.9" y1="938" x2="750.9" y2="950" stroke="#a0a0a0" stroke-width="1"/><line x1="768.9" y1="938" x2="768.9" y2="950" stroke="#a0a0a0" stroke-width="1"/><line x1="786.9" y1="938" x2="786.9" y2="950" stroke="#a0a0a0" stroke-width="1"/><line x1="804.8" y1="938" x2="804.8" y2="950" stroke="#a0a0a0" stroke-width="1"/><line x1="822.8" y1="938" x2="822.8" y2="950" stroke="#a0a0a0" stroke-width="1"/><line x1="822.8" y1="961" x2="822.8" y2="963" stroke="#a0a0a0" stroke-width="1"/><line x1="840.7" y1="938" x2="840.7" y2="950" stroke="#a0a0a0" stroke-width="1"/><line x1="858.7" y1="938" x2="858.7" y2="950" stroke="#a0a0a0" stroke-width="1"/><line x1="876.7" y1="938" x2="876.7" y2="950" stroke="#a0a0a0" stroke-width="1"/><line x1="894.6" y1="938" x2="894.6" y2="950" stroke="#a0a0a0" stroke-width="1"/><line x1="912.6" y1="938" x2="912.6" y2="950" stroke="#a0a0a0" stroke-width="1"/><line x1="912.6" y1="961" x2="912.6" y2="963" stroke="#a0a0a0" stroke-width="1"/><line x1="930.6" y1="938" x2="930.6" y2="950" stroke="#a0a0a0" stroke-width="1"/><line x1="948.5" y1="938" x2="948.5" y2="950" stroke="#a0a0a0" stroke-width="1"/><line x1="966.5" y1="938" x2="966.5" y2="950" stroke="#a0a0a0" stroke-width="1"/><line x1="984.5" y1="938" x2="984.5" y2="950" stroke="#a0a0a0" stroke-width="1"/><line x1="1002.4" y1="938" x2="1002.4" y2="950" stroke="#a0a0a0" stroke-width="1"/><line x1="1002.4" y1="961" x2="1002.4" y2="963" stroke="#a0a0a0" stroke-width="1"/><line x1="1020.4" y1="938" x2="1020.4" y2="950" stroke="#a0a0a0" stroke-width="1"/><line x1="1038.3" y1="938" x2="1038.3" y2="950" stroke="#a0a0a0" stroke-width="1"/><line x1="1056.3" y1="938" x2="1056.3" y2="950" stroke="#a0a0a0" stroke-width="1"/><line x1="1074.3" y1="938" x2="1074.3" y2="950" stroke="#a0a0a0" stroke-width="1"/><line x1="1092.2" y1="938" x2="1092.2" y2="950" stroke="#a0a0a0" stroke-width="1"/><line x1="1092.2" y1="961" x2="1092.2" y2="963" stroke="#a0a0a0" stroke-width="1"/><line x1="1110.2" y1="938" x2="1110.2" y2="950" stroke="#a0a0a0" stroke-width="1"/><line x1="1128.2" y1="938" x2="1128.2" y2="950" stroke="#a0a0a0" stroke-width="1"/><line x1="1146.1" y1="938" x2="1146.1" y2="950" stroke="#a0a0a0" stroke-width="1"/><line x1="1164.1" y1="938" x2="1164.1" y2="950" stroke="#a0a0a0" stroke-width="1"/><line x1="1182.1" y1="938" x2="1182.1" y2="950" stroke="#a0a0a0" stroke-width="1"/><line x1="1182.1" y1="961" x2="1182.1" y2="963" stroke="#a0a0a0" stroke-width="1"/><line x1="1200.0" y1="938" x2="1200.0" y2="950" stroke="#a0a0a0" stroke-width="1"/><line x1="1218.0" y1="938" x2="1218.0" y2="950" stroke="#a0a0a0" stroke-width="1"/><line x1="1236.0" y1="938" x2="1236.0" y2="950" stroke="#a0a0a0" stroke-width="1"/><line x1="1253.9" y1="938" x2="1253.9" y2="950" stroke="#a0a0a0" stroke-width="1"/><line x1="1271.9" y1="938" x2="1271.9" y2="950" stroke="#a0a0a0" stroke-width="1"/><line x1="1271.9" y1="961" x2="1271.9" y2="963" stroke="#a0a0a0" stroke-width="1"/><line x1="1289.8" y1="938" x2="1289.8" y2="950" stroke="#a0a0a0" stroke-width="1"/><line x1="1307.8" y1="938" x2="1307.8" y2="950" stroke="#a0a0a0" stroke-width="1"/><line x1="1325.8" y1="938" x2="1325.8" y2="950" stroke="#a0a0a0" stroke-width="1"/><line x1="1343.7" y1="938" x2="1343.7" y2="950" stroke="#a0a0a0" stroke-width="1"/><line x1="1361.7" y1="938" x2="1361.7" y2="950" stroke="#a0a0a0" stroke-width="1"/><line x1="1361.7" y1="961" x2="1361.7" y2="963" stroke="#a0a0a0" stroke-width="1"/><line x1="1379.7" y1="938" x2="1379.7" y2="950" stroke="#a0a0a0" stroke-width="1"/><line x1="1397.6" y1="938" x2="1397.6" y2="950" stroke="#a0a0a0" stroke-width="1"/><line x1="1415.6" y1="938" x2="1415.6" y2="950" stroke="#a0a0a0" stroke-width="1"/><line x1="1433.6" y1="938" x2="1433.6" y2="950" stroke="#a0a0a0" stroke-width="1"/><line x1="1451.5" y1="938" x2="1451.5" y2="950" stroke="#a0a0a0" stroke-width="1"/><line x1="1451.5" y1="961" x2="1451.5" y2="963" stroke="#a0a0a0" stroke-width="1"/><line x1="1469.5" y1="938" x2="1469.5" y2="950" stroke="#a0a0a0" stroke-width="1"/><line x1="1487.4" y1="938" x2="1487.4" y2="950" stroke="#a0a0a0" stroke-width="1"/><line x1="1505.4" y1="938" x2="1505.4" y2="950" stroke="#a0a0a0" stroke-width="1"/><line x1="1523.4" y1="938" x2="1523.4" y2="950" stroke="#a0a0a0" stroke-width="1"/><line x1="1541.3" y1="938" x2="1541.3" y2="950" stroke="#a0a0a0" stroke-width="1"/><line x1="1541.3" y1="961" x2="1541.3" y2="963" stroke="#a0a0a0" stroke-width="1"/><line x1="1559.3" y1="938" x2="1559.3" y2="950" stroke="#a0a0a0" stroke-width="1"/><line x1="1577.3" y1="938" x2="1577.3" y2="950" stroke="#a0a0a0" stroke-width="1"/><line x1="1595.2" y1="938" x2="1595.2" y2="950" stroke="#a0a0a0" stroke-width="1"/><line x1="1613.2" y1="938" x2="1613.2" y2="950" stroke="#a0a0a0" stroke-width="1"/><line x1="1631.2" y1="938" x2="1631.2" y2="950" stroke="#a0a0a0" stroke-width="1"/><line x1="1631.2" y1="961" x2="1631.2" y2="963" stroke="#a0a0a0" stroke-width="1"/><line x1="1649.1" y1="938" x2="1649.1" y2="950" stroke="#a0a0a0" stroke-width="1"/><line x1="1667.1" y1="938" x2="1667.1" y2="950" stroke="#a0a0a0" stroke-width="1"/><line x1="1685.1" y1="938" x2="1685.1" y2="950" stroke="#a0a0a0" stroke-width="1"/><line x1="1703.0" y1="938" x2="1703.0" y2="950" stroke="#a0a0a0" stroke-width="1"/><line x1="1721.0" y1="938" x2="1721.0" y2="950" stroke="#a0a0a0" stroke-width="1"/><line x1="1721.0" y1="961" x2="1721.0" y2="963" stroke="#a0a0a0" stroke-width="1"/><line x1="1738.9" y1="938" x2="1738.9" y2="950" stroke="#a0a0a0" stroke-width="1"/><line x1="1756.9" y1="938" x2="1756.9" y2="950" stroke="#a0a0a0" stroke-width="1"/><line x1="1774.9" y1="938" x2="1774.9" y2="950" stroke="#a0a0a0" stroke-width="1"/></svg>
<span class="t" style="left:11px;top:949px;font-size:11px;color:#d0d0d0;">0</span>
<span class="t" style="left:101px;top:949px;font-size:11px;color:#d0d0d0;">5</span>
<span class="t" style="left:188px;top:949px;font-size:11px;color:#d0d0d0;">10</span>
<span class="t" style="left:278px;top:949px;font-size:11px;color:#d0d0d0;">15</span>
<span class="t" style="left:368px;top:949px;font-size:11px;color:#d0d0d0;">20</span>
<span class="t" style="left:457px;top:949px;font-size:11px;color:#d0d0d0;">25</span>
<span class="t" style="left:547px;top:949px;font-size:11px;color:#d0d0d0;">30</span>
<span class="t" style="left:637px;top:949px;font-size:11px;color:#d0d0d0;">35</span>
<span class="t" style="left:727px;top:949px;font-size:11px;color:#d0d0d0;">40</span>
<span class="t" style="left:817px;top:949px;font-size:11px;color:#d0d0d0;">45</span>
<span class="t" style="left:907px;top:949px;font-size:11px;color:#d0d0d0;">50</span>
<span class="t" style="left:996px;top:949px;font-size:11px;color:#d0d0d0;">55</span>
<span class="t" style="left:1086px;top:949px;font-size:11px;color:#d0d0d0;">60</span>
<span class="t" style="left:1176px;top:949px;font-size:11px;color:#d0d0d0;">65</span>
<span class="t" style="left:1266px;top:949px;font-size:11px;color:#d0d0d0;">70</span>
<span class="t" style="left:1356px;top:949px;font-size:11px;color:#d0d0d0;">75</span>
<span class="t" style="left:1446px;top:949px;font-size:11px;color:#d0d0d0;">80</span>
<span class="t" style="left:1535px;top:949px;font-size:11px;color:#d0d0d0;">85</span>
<span class="t" style="left:1625px;top:949px;font-size:11px;color:#d0d0d0;">90</span>
<span class="t" style="left:1715px;top:949px;font-size:11px;color:#d0d0d0;">95</span>
</body></html>
